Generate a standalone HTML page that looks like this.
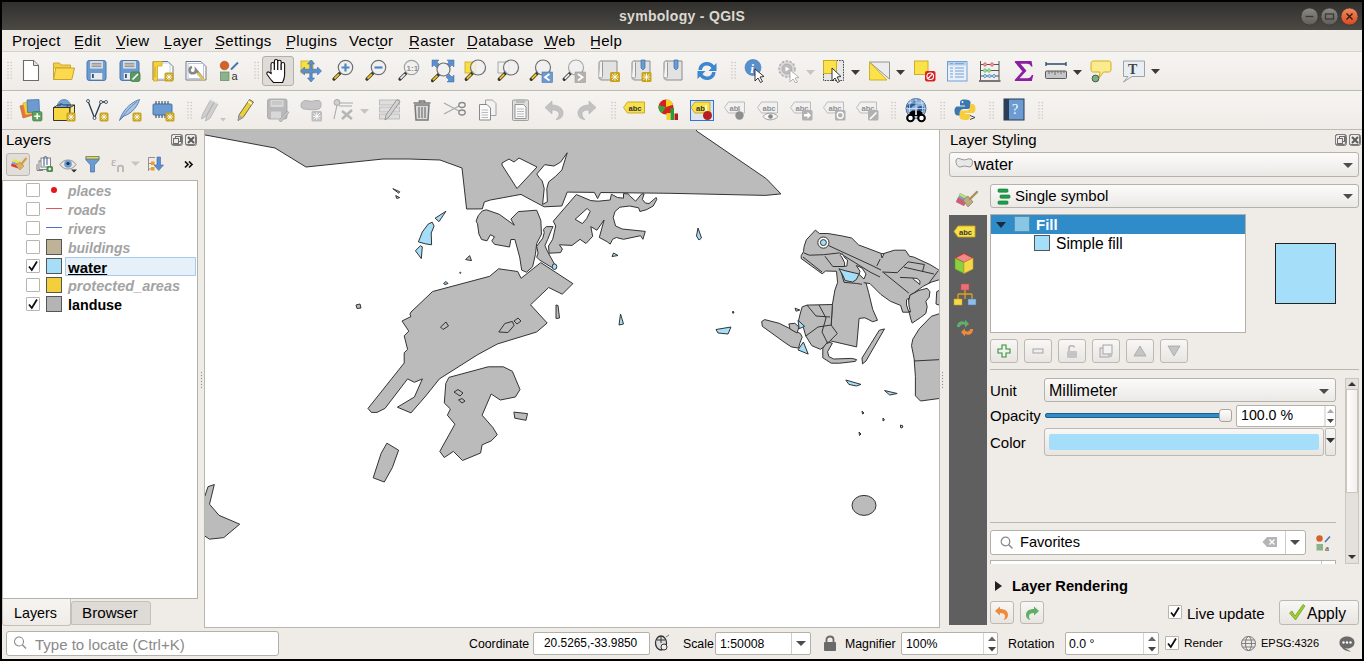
<!DOCTYPE html>
<html><head><meta charset="utf-8">
<style>
*{margin:0;padding:0;box-sizing:border-box}
html,body{width:1364px;height:661px;overflow:hidden;background:#efebe7}
body{position:relative;font-family:"Liberation Sans",sans-serif;color:#000;font-size:15px}
.a{position:absolute}
.t{position:absolute;white-space:pre;line-height:1.149}
.tb{position:absolute;left:2px;width:1360px;background:linear-gradient(#f6f4f1,#efece8);border-bottom:1px solid #bdb9b3}
.grip{position:absolute;width:5px;height:18px;background-image:radial-gradient(circle,#aaa6a0 0.8px,transparent 1px);background-size:3px 3px}
.wb{position:absolute;width:17px;height:17px;border-radius:50%}
.box{position:absolute;background:#fff;border:1px solid #b4b0aa}
.combo{position:absolute;border:1px solid #b5b1ab;border-radius:3px;background:linear-gradient(#fcfbfa,#ebe9e6)}
.btn{position:absolute;border:1px solid #bcb8b2;border-radius:3px;background:linear-gradient(#f8f7f5,#e8e5e1)}
.dd{position:absolute;width:0;height:0;border-left:5px solid transparent;border-right:5px solid transparent;border-top:5px solid #4c4c4c}
.cb{position:absolute;width:14px;height:14px;border:1px solid #b8b4ae;background:#fff;border-radius:1px}
.sw{position:absolute;width:16px;height:16px;border:1px solid #555}
.dbtn{position:absolute;width:11px;height:11px;border:1px solid #777;border-radius:2px}
.gray{color:#a3a3a3}
</style></head><body>
<!-- title bar -->
<div class="a" style="left:0;top:0;width:1364px;height:30px;background:linear-gradient(#2f2e2b,#4a4944)"></div>
<div class="t" style="left:619px;top:8px;font-size:14px;font-weight:bold;color:#dcd9d2;letter-spacing:0.3px">symbology - QGIS</div>
<!-- menu -->
<div class="a" style="left:0;top:30px;width:1364px;height:22px;background:#eeebe7;border-bottom:1px solid #d6d2cc"></div>
<div class="t" style="left:12px;top:32px;letter-spacing:0.3px">Project</div>
<div class="t" style="left:74px;top:32px;letter-spacing:0.3px">Edit</div>
<div class="t" style="left:116px;top:32px;letter-spacing:0.3px">View</div>
<div class="t" style="left:164px;top:32px;letter-spacing:0.3px">Layer</div>
<div class="t" style="left:215px;top:32px;letter-spacing:0.3px">Settings</div>
<div class="t" style="left:286px;top:32px;letter-spacing:0.3px">Plugins</div>
<div class="t" style="left:349px;top:32px;letter-spacing:0.3px">Vector</div>
<div class="t" style="left:409px;top:32px;letter-spacing:0.3px">Raster</div>
<div class="t" style="left:467px;top:32px;letter-spacing:0.3px">Database</div>
<div class="t" style="left:544px;top:32px;letter-spacing:0.3px">Web</div>
<div class="t" style="left:590px;top:32px;letter-spacing:0.3px">Help</div>
<div class="a" style="left:35px;top:48px;width:4px;height:1px;background:#111"></div>
<div class="a" style="left:75px;top:48px;width:8px;height:1px;background:#111"></div>
<div class="a" style="left:116px;top:48px;width:9px;height:1px;background:#111"></div>
<div class="a" style="left:164px;top:48px;width:7px;height:1px;background:#111"></div>
<div class="a" style="left:215px;top:48px;width:8px;height:1px;background:#111"></div>
<div class="a" style="left:286px;top:48px;width:8px;height:1px;background:#111"></div>
<div class="a" style="left:378px;top:48px;width:6px;height:1px;background:#111"></div>
<div class="a" style="left:409px;top:48px;width:10px;height:1px;background:#111"></div>
<div class="a" style="left:467px;top:48px;width:10px;height:1px;background:#111"></div>
<div class="a" style="left:544px;top:48px;width:12px;height:1px;background:#111"></div>
<div class="a" style="left:591px;top:48px;width:9px;height:1px;background:#111"></div>
<!-- toolbars -->
<div class="tb" style="top:52px;height:39px"></div>
<div class="tb" style="top:91px;height:39px"></div>

<!-- ===== left dock ===== -->
<div class="t" style="left:6px;top:131px">Layers</div>
<div class="dbtn" style="left:171px;top:134px"></div>
<div class="dbtn" style="left:185px;top:134px"></div>
<div class="a" style="left:6px;top:153px;width:24px;height:23px;border:1px solid #b9b5af;border-radius:3px;background:#e1ddd8"></div>
<div class="box" style="left:2px;top:180px;width:196px;height:419px"></div>
<!-- layer rows -->
<div class="cb" style="left:26px;top:183px"></div>
<div class="cb" style="left:26px;top:202px"></div>
<div class="cb" style="left:26px;top:221px"></div>
<div class="cb" style="left:26px;top:240px"></div>
<div class="cb" style="left:26px;top:259px"></div>
<div class="cb" style="left:26px;top:278px"></div>
<div class="cb" style="left:26px;top:297px"></div>
<div class="a" style="left:51px;top:187px;width:6px;height:6px;border-radius:50%;background:#e8141b"></div>
<div class="a" style="left:46px;top:208px;width:16px;height:1px;background:#d9585e"></div>
<div class="a" style="left:46px;top:227px;width:16px;height:1px;background:#4b73c9"></div>
<div class="sw" style="left:46px;top:239px;background:#beb297"></div>
<div class="sw" style="left:46px;top:258px;background:#a5def8"></div>
<div class="sw" style="left:46px;top:277px;background:#f3d03b"></div>
<div class="sw" style="left:46px;top:296px;background:#b4b4b4"></div>
<div class="a" style="left:65px;top:257px;width:131px;height:19px;background:#e6f0f9;border:1px solid #a9cbe9"></div>
<div class="t gray" style="left:68px;top:183px;font-size:14px;font-weight:bold;font-style:italic">places</div>
<div class="t gray" style="left:68px;top:202px;font-size:14px;font-weight:bold;font-style:italic">roads</div>
<div class="t gray" style="left:68px;top:221px;font-size:14px;font-weight:bold;font-style:italic">rivers</div>
<div class="t gray" style="left:68px;top:240px;font-size:14px;font-weight:bold;font-style:italic">buildings</div>
<div class="t" style="left:68px;top:259px;font-size:15px;font-weight:bold;text-decoration:underline">water</div>
<div class="t gray" style="left:68px;top:278px;font-size:14.5px;font-weight:bold;font-style:italic">protected_areas</div>
<div class="t" style="left:68px;top:297px;font-size:14.3px;font-weight:bold">landuse</div>
<!-- tabs -->
<div class="a" style="left:71px;top:601px;width:80px;height:24px;background:#dedad5;border:1px solid #c3bfb9;border-radius:3px 3px 0 0"></div>
<div class="a" style="left:2px;top:599px;width:69px;height:27px;background:linear-gradient(#f6f4f1,#efece8);border:1px solid #c3bfb9;border-top:none;border-radius:0 0 3px 3px"></div>
<div class="t" style="left:14px;top:605px;font-size:14.3px">Layers</div>
<div class="t" style="left:82px;top:604px;font-size:15.2px">Browser</div>

<!-- ===== map ===== -->
<div class="a" style="left:204px;top:130px;width:736px;height:498px;background:#fff;border:1px solid #b9b5af;border-top:none"></div>
<div class="a" style="left:198px;top:130px;width:6px;height:497px;background:#efebe7"></div>
<svg class="a" style="left:205px;top:130px" width="734" height="497" viewBox="205 130 734 497">
<g fill="#bbbbbb" stroke="#333" stroke-width="1" stroke-linejoin="round">
<!-- top polygon -->
<path d="M200,120 L200,134 L275,148 L306,167 L383,159 L409,159 L440,160 L462,168 L466.6,209 L482.3,208.9 L484.3,202 L490.4,200 L521,194.4 L531.3,200 L544.2,206.8 L561.8,206 L567.2,192.1 L594.4,192.4 L597.6,198.6 L600.7,192.5 L670,193.3 L765.2,195.4 L780.9,193.9 L766.3,178.7 L697,131.3 L690,120 Z
 M502,163 L509,159 L514,162 L519,158 L537,167 L517,188.5 L502,165 Z
 M536.8,174 L544.7,164.7 L554,166 L560.6,162.1 L567.2,152.8 L561.9,170 L555.3,176.6 L548.7,181.9 L546.8,188.5 L547.4,201.8 L542.6,204.4 L544.2,188.5 L542.1,180.6 L539.4,178 Z" fill-rule="evenodd"/>
<!-- harbor -->
<path d="M553.3,221.2 L576.3,194.5 L590.8,200.6 L598.1,201.2 L610.2,200 L611.4,194.2 L617.5,197.5 L623.5,198.2 L623.5,193.6 L628.4,193.9 L629.6,195.7 L635.6,201.2 L641.7,193.9 L644.1,193.9 L642.3,199.4 L645.3,203 L649,203.6 L656.2,197.5 L656.8,199.4 L653.2,206 L646.5,209.7 L639.9,211.5 L638.6,207.8 L629.6,206 L619.9,207.2 L615,211.5 L613.2,217.5 L615.6,226 L622.3,229 L645.3,231.4 L642.9,239.3 L640.5,235.7 L623.5,239.3 L616.3,237.5 L612.6,239.3 L610.2,244.1 L607.2,241.7 L599.3,237.5 L604.1,220 L596.9,230.2 L590.8,226.6 L592.7,236.3 L586,243.5 L580,239.3 L572.1,245.4 L559.4,244.8 L562.4,249 L560.6,252.6 L549.1,253.2 L548.5,246 L552.7,239.3 L555.7,226 Z
 M575.1,219.3 L587.2,208.4 L590.2,211.5 L586.6,218.7 L582.4,223.6 Z" fill-rule="evenodd"/>
<!-- Y polygon -->
<path d="M476.1,221.1 L478.2,215.7 L482.3,210.9 L486.3,209.8 L499.3,214.3 L514.3,225.2 L510.9,219.1 L518.3,211.6 L536.7,210.2 L540.8,220.4 L541.5,234 L536.7,243.6 L535.4,254.5 L532.6,266.7 L526.5,272.2 L521.7,270.1 L519.7,257.2 L514.9,239.5 L510.9,239.5 L509.5,247 L494.5,244.3 L491.8,240.8 L494.5,236.8 L490.4,234.7 L487,240.8 L481.6,239.5 L478.9,234 L477.5,223.8 Z"/>
<!-- narrow strip -->
<path d="M543.5,229.3 L546.3,226.6 L553.1,226.6 L551.7,229.3 L547.6,239.5 L544.9,245.6 L547.6,251.7 L554.4,264 L551.7,267.4 L539.4,259.9 L536.7,257.2 L538.1,253.1 L536.7,246.3 L542.8,238.1 L544.2,232.7 Z"/>
<!-- SW polygon -->
<path d="M432.6,291.5 L489.7,276.3 L498.6,268.8 L517.7,271.5 L521.1,278.3 L540.8,262.6 L572.9,283.6 L562.3,294.2 L548.7,287.5 L530.5,304.8 L547.2,323 L536.6,332 L497.3,344 L477.6,354.7 L439.4,378.9 L425.8,395.9 L411,412.9 L397.4,407.2 L414.4,397 L422.4,378.9 L414.4,382.3 L407.6,378.9 L385,408.4 L377,412.4 L371.3,412.4 L368,408.4 L404.2,363 L404.2,352.8 L407.6,349.4 L404.2,335.8 L408.8,331.2 L402,321 L411,316.5 L409.9,314.2 L411,312 Z"/>
<path d="M440.5,327 L446,322 L448.5,326 L443,329.5 Z"/>
<path d="M498.8,332 L504.8,323.5 L512.4,321.4 L514,325.5 L508,332.5 Z M514,321 L518,318 L521,321 L517,324 Z"/>
<!-- hand polygon -->
<path d="M448.9,377.4 L488.2,366.8 L503.3,366.8 L512.4,371.3 L520,389.5 L515.4,397 L500.3,400 L491.2,394 L482.1,415.2 L492.7,427.3 L497.3,434.8 L491.2,440.9 L482.1,444.8 L480.6,453 L462.5,460.5 L453.4,451.4 L444.3,457.5 L439.8,451.4 L454.9,424.2 L447.4,415.2 L450.4,409 L444.3,403 L445.8,383.4 Z"/>
<path d="M454,392 L458,389.5 L463,393 L460,396 Z M458.5,400 L462,398.5 L465,401 L462,403 Z"/>
<path d="M513.9,412.1 L527.5,413.6 L526,420.3 L514.8,418.2 Z"/>
<!-- bottom left rect -->
<path d="M386.9,443.2 L398.6,450.2 L392.3,467.7 L384.3,482 L373.2,477.8 L381.1,453.4 Z"/>
<!-- left edge polygon -->
<path d="M200,496.3 L204.8,496.3 L208,486.7 L214.3,484.5 L209.5,504.2 L219,515.3 L239.7,524.2 L223.8,537.6 L209.5,539.2 L204.8,536 L200,536 Z"/>
<!-- circle -->
<ellipse cx="864" cy="505.4" rx="12" ry="10"/>
<!-- small bits -->
<path d="M465.6,259.6 L469.6,255.6 L471.5,260.6 Z"/><circle cx="460.3" cy="272.8" r="0.6"/>
<path d="M356,305 L360,304 L361,308 L357,308.5 Z"/>
<path d="M556,305 L558,305.5 L559.5,318 L556,318.5 Z"/>
<path d="M637,197.7 L656.8,197.7 L653.4,206.6 L640,211 Z" fill="none" stroke="none"/>
<!-- right cluster -->
<path d="M801.2,255.6 L803.5,251.7 L804.1,246.6 L806.3,239.8 L815.4,230.1 L819.4,233.5 L827.9,233.5 L841.5,235.8 L851.7,238 L858.6,244.9 L881.6,253.6 L883.6,253.6 L894.5,250.2 L905.4,250.2 L909.5,256.3 L913.6,257 L929.9,264.5 L936.7,268.6 L940,271 L940,279.5 L931.3,282.2 L923.1,286.3 L913.6,293.1 L910.1,295.1 L908.1,304 L909.5,312.2 L902.7,312.2 L900.6,305.4 L890.4,301.3 L880.9,294.5 L870,283.6 L866,283 L868.6,292.4 L872.7,309.4 L877.5,320.3 L872.7,321.7 L865,317.8 L859.1,318.4 L856.6,346.9 L830,340.8 L831.2,325.1 L832.4,304.5 L834.9,290 L837.6,282.6 L836.5,271.3 L825.6,271 L822.2,273.8 L801.2,258.5 Z"/>
<path d="M910.1,295.1 L919,290.4 L927.2,288.3 L929.9,291.7 L929.2,297.2 L925.8,301.3 L927.2,306.7 L925.8,313.5 L920.4,317.6 L912.2,323.1 L910.8,319 L908.8,310.8 L906.7,304 L908.8,299.9 Z"/>
<path d="M936.7,291.7 L940,290 L940,305.4 L936,304 Z"/>
<path d="M940,313.5 L931.3,316.3 L919.2,328.9 L912.8,339.2 L911.5,345.6 L914.1,358.5 L915.4,376.5 L915.4,395.8 L920.5,401 L940,398.4 Z"/>
<path d="M914,361 L940,359.6" fill="none"/>
<path d="M802.2,306.9 L807,305.1 L832.4,304.5 L831.2,325.1 L837.3,333.6 L830,340.8 L824,346.9 L820.3,349.3 L811.9,345.7 L805.8,336 L803.4,327.5 L798.6,320.3 L800.4,313 Z"/>
<path d="M761.7,321.5 L764.7,319.6 L779.2,323.3 L790.1,328.7 L800.4,333.6 L802.2,337.2 L799.8,343.2 L798.6,348.1 L791.3,346.9 L784,342 L762.3,326.3 Z"/>
<path d="M788.9,323.9 L794.9,323.3 L799,327 L797,333 L790,329 Z"/>
<path d="M822.8,348.1 L827.6,342 L832.4,343.2 L827.6,351.7 L828.8,356.6 L833.7,359 L851.8,358.4 L856.6,359.6 L855.4,361.4 L839.7,363.2 L831.2,363.2 L822.8,357.8 Z"/>
<path d="M884.5,328.9 L879.3,330.2 L862,358 L862.5,363.9 L866,361 Z"/>
<!-- interior lines -->
<path d="M828.2,245.4 L870,264.6 L881,270 M839.4,252.9 L870,272 L880,277 M803.8,252.9 L809.4,255.2 L823.5,254.7 L839.4,252.9 M824.9,256.2 L832.8,266.5 L844.1,266.5 M841,271.5 L844,282.4 L856.3,283.4 L862,284.3 M880.2,259.1 L876.8,265.9 M882.2,272 L897.2,272.7 L908.1,261.8 L924.4,264.5 L922.4,272 M904,267.2 L934,274 M883.6,272.7 L908.8,293.1 M866,283 L863.7,282.6 M900,277.4 L913,278 M929,283 L938,271 M803,257 L822,272" fill="none"/>
<path d="M807,305.1 L816,316 L830,317 M805.8,336 L818,327 L831,325 M819,305 L826,318 L822,332 L828,344" fill="none"/>
<g fill="#fff">
<path d="M840.3,255.5 L842,253.5 L845,258 L847.5,260 L846.9,266 L844.5,266.5 L844.6,262.7 L841.8,257.1 Z"/>
<path d="M856.3,265.5 L862,268 L866,274 L864,279 L859.1,274.5 L860,271.2 Z"/>
<path d="M913,278 L917,278.5 L920,281 L919.7,284.5 L917,282 L913.5,279.5 Z"/>
<path d="M906.5,300 L908.5,298 L909,306 L910.5,312 L908.5,311 L906.5,305 Z"/>
<path d="M881,253.8 L884,253.6 L882,258 Z"/>
</g>
</g>
<g fill="#a5def8" stroke="#333" stroke-width="1" stroke-linejoin="round">
<path d="M838.9,268.8 L845,270.7 L859.1,274 L856.3,279.6 L852.5,282 L845,280.5 L842.7,274.9 Z"/>
<circle cx="823.4" cy="242.6" r="5.6" fill="#fff"/>
<circle cx="823.4" cy="242.6" r="3"/>
<path d="M798,320.3 L804.6,326.3 L799.2,328.7 Z"/>
<path d="M803.4,342 L808.2,354.1 L798,349.9 Z"/>
<path d="M795,308.2 L799.8,310 L796.1,311.2 Z"/>
<path d="M845.8,380 L861,384.4 L856.4,386 L848.9,384.4 Z"/>
<path d="M884.5,390.5 L897.2,393.5 L889.7,395 Z"/>
<path d="M862,411 L864,413 L862.5,414 Z"/>
<path d="M859,432 L861,434 L859.5,435.5 Z"/>
<path d="M900.5,425 L903,426 L902,428 L900.5,427.5 Z"/>
<path d="M883,418 L884.5,420 L883,421 Z"/>
<path d="M698,228 L701.5,238 L699,240 L696.5,236 Z"/>
<path d="M613.6,253 L618,255.5 L612,256.5 Z"/>
<ellipse cx="554.5" cy="266.7" rx="2.3" ry="2.8"/>
<path d="M620.5,314 L623.5,324 L619,325 Z"/>
<path d="M716,329.5 L731,327 L728,334 L718,333 Z"/>
<path d="M733,311 L734,313 L732.5,313 Z"/>
<path d="M418.4,241.9 L422.3,232 L428.2,224.1 L432.2,222.2 L434.1,226.1 L431.2,233 L431.6,244.8 L425.3,243.8 Z"/>
<path d="M435.1,218.2 L445.9,211.3 L439,221.6 Z"/>
<path d="M415.4,250.7 L420.4,245.8 L422.3,246.8 L421.3,258.6 Z"/>
<path d="M392.8,188.7 L399.7,191.7 L398.7,193.2 Z"/>
<path d="M395.7,195.6 L399.7,197.6 L396.7,198.5 Z"/>
<path d="M443.5,283.5 L446,281.5 L448,283.5 L445,284.5 Z"/>
</g>
</svg>


<!-- ===== right dock ===== -->
<div class="t" style="left:950px;top:131px">Layer Styling</div>
<div class="dbtn" style="left:1335px;top:134px"></div>
<div class="dbtn" style="left:1349px;top:134px"></div>
<div class="combo" style="left:949px;top:152px;width:410px;height:25px"></div>
<div class="t" style="left:974px;top:156px;font-size:16px">water</div>
<div class="dd" style="left:1343px;top:163px"></div>
<div class="combo" style="left:990px;top:184px;width:369px;height:24px"></div>
<div class="t" style="left:1015px;top:187px;font-size:15px">Single symbol</div>
<div class="dd" style="left:1343px;top:194px"></div>
<div class="a" style="left:949px;top:215px;width:38px;height:410px;background:#5f5f5f"></div>
<div class="box" style="left:990px;top:214px;width:256px;height:119px"></div>
<div class="a" style="left:991px;top:215px;width:254px;height:19px;background:#308bc9"></div>
<div class="sw" style="left:1014px;top:216px;background:#86c6e6;border-color:#5a8fb0"></div>
<div class="t" style="left:1036px;top:216px;font-size:15px;font-weight:bold;color:#fff">Fill</div>
<div class="a" style="left:996px;top:222px;width:0;height:0;border-left:5px solid transparent;border-right:5px solid transparent;border-top:6px solid #1a2a3a"></div>
<div class="sw" style="left:1034px;top:235px;background:#a5def8"></div>
<div class="t" style="left:1056px;top:235px;font-size:15.6px">Simple fill</div>
<div class="a" style="left:1275px;top:243px;width:61px;height:61px;background:#a5def8;border:1px solid #222"></div>
<div class="btn" style="left:990px;top:339px;width:28px;height:24px"></div>
<div class="btn" style="left:1024px;top:339px;width:28px;height:24px"></div>
<div class="btn" style="left:1058px;top:339px;width:28px;height:24px"></div>
<div class="btn" style="left:1092px;top:339px;width:28px;height:24px"></div>
<div class="btn" style="left:1126px;top:339px;width:28px;height:24px"></div>
<div class="btn" style="left:1160px;top:339px;width:28px;height:24px"></div>
<div class="a" style="left:990px;top:369px;width:369px;height:1px;background:#bab6b0"></div>
<div class="t" style="left:990px;top:382px">Unit</div>
<div class="combo" style="left:1044px;top:378px;width:292px;height:24px"></div>
<div class="t" style="left:1049px;top:382px;font-size:16px">Millimeter</div>
<div class="dd" style="left:1319px;top:389px"></div>
<div class="t" style="left:990px;top:407px">Opacity</div>
<div class="a" style="left:1045px;top:413px;width:182px;height:5px;background:#308bc9;border:1px solid #1f5f8a;border-radius:2px"></div>
<div class="a" style="left:1219px;top:409px;width:13px;height:13px;background:linear-gradient(#fdfdfc,#e9e7e4);border:1px solid #a8a49e;border-radius:3px"></div>
<div class="box" style="left:1236px;top:405px;width:100px;height:22px;border-radius:2px"></div>
<div class="t" style="left:1241px;top:407px;font-size:14.2px">100.0 %</div>
<div class="t" style="left:990px;top:434px">Color</div>
<div class="btn" style="left:1044px;top:428px;width:280px;height:28px"></div>
<div class="a" style="left:1049px;top:434px;width:270px;height:16px;background:#a5def8;border-radius:2px"></div>
<div class="btn" style="left:1325px;top:428px;width:11px;height:28px;border-radius:2px"></div>
<div class="a" style="left:1345px;top:378px;width:14px;height:186px;background:#e4e1dd;border:1px solid #c9c5bf"></div>
<div class="a" style="left:1346px;top:389px;width:12px;height:104px;background:linear-gradient(90deg,#fdfdfc,#f2f0ed);border:1px solid #c9c5bf"></div>
<div class="a" style="left:990px;top:522px;width:346px;height:1px;background:#bab6b0"></div>
<div class="box" style="left:990px;top:530px;width:316px;height:25px;border-radius:3px"></div>
<div class="a" style="left:1285px;top:531px;width:1px;height:23px;background:#d0ccc6"></div>
<div class="t" style="left:1020px;top:534px;font-size:14.6px">Favorites</div>
<div class="dd" style="left:1290px;top:540px"></div>
<div class="box" style="left:990px;top:560px;width:346px;height:10px"></div>
<div class="a" style="left:1321px;top:561px;width:1px;height:4px;background:#c9c5bf"></div>
<div class="a" style="left:949px;top:564px;width:400px;height:10px;background:#efebe7"></div>
<div class="a" style="left:949px;top:215px;width:38px;height:410px;background:#5f5f5f"></div>
<div class="a" style="left:995px;top:581px;width:0;height:0;border-top:5px solid transparent;border-bottom:5px solid transparent;border-left:7px solid #222"></div>
<div class="t" style="left:1012px;top:578px;font-size:14.7px;font-weight:bold">Layer Rendering</div>
<div class="btn" style="left:990px;top:601px;width:24px;height:23px"></div>
<div class="btn" style="left:1020px;top:601px;width:24px;height:23px"></div>
<div class="cb" style="left:1168px;top:605px"></div>
<div class="t" style="left:1187px;top:605px;font-size:15px">Live update</div>
<div class="btn" style="left:1279px;top:600px;width:80px;height:25px"></div>
<div class="t" style="left:1307px;top:605px;font-size:15.6px">Apply</div>

<!-- ===== status bar ===== -->
<div class="box" style="left:6px;top:631px;width:273px;height:25px;border-radius:3px"></div>
<div class="t" style="left:35px;top:636px;font-size:15px;color:#8a8a8a">Type to locate (Ctrl+K)</div>
<div class="t" style="left:469px;top:637px;font-size:12.3px">Coordinate</div>
<div class="box" style="left:533px;top:632px;width:117px;height:23px;border-radius:2px"></div>
<div class="t" style="left:544px;top:637px;font-size:11.9px">20.5265,-33.9850</div>
<div class="t" style="left:683px;top:637px;font-size:12.3px">Scale</div>
<div class="box" style="left:715px;top:632px;width:96px;height:23px;border-radius:2px"></div>
<div class="a" style="left:791px;top:633px;width:1px;height:21px;background:#d0ccc6"></div>
<div class="t" style="left:720px;top:637px;font-size:12.3px">1:50008</div>
<div class="dd" style="left:796px;top:641px"></div>
<div class="t" style="left:845px;top:637px;font-size:12.3px">Magnifier</div>
<div class="box" style="left:901px;top:632px;width:97px;height:23px;border-radius:2px"></div>
<div class="t" style="left:906px;top:637px;font-size:12.3px">100%</div>
<div class="a" style="left:983px;top:633px;width:1px;height:21px;background:#d8d4ce"></div>
<div class="t" style="left:1008px;top:637px;font-size:12.5px">Rotation</div>
<div class="box" style="left:1065px;top:632px;width:94px;height:23px;border-radius:2px"></div>
<div class="t" style="left:1069px;top:637px;font-size:12.3px">0.0 °</div>
<div class="a" style="left:1143px;top:633px;width:1px;height:21px;background:#d8d4ce"></div>
<div class="cb" style="left:1165px;top:636px"></div>
<div class="t" style="left:1184px;top:637px;font-size:11.8px">Render</div>
<div class="t" style="left:1261px;top:637px;font-size:11px">EPSG:4326</div>

<!--ICONS-->
<svg class="a" style="left:1300px;top:7px" width="60" height="19" viewBox="0 0 60 19"><circle cx="9.5" cy="9.5" r="8.6" fill="url(#gb)" stroke="#3a3935" stroke-width="0.8"/><circle cx="29.5" cy="9.5" r="8.6" fill="url(#gb)" stroke="#3a3935" stroke-width="0.8"/><circle cx="49.5" cy="9.5" r="8.6" fill="url(#go)" stroke="#3a3935" stroke-width="0.8"/><defs><linearGradient id="gb" x1="0" y1="0" x2="0" y2="1"><stop offset="0" stop-color="#8c8a85"/><stop offset="1" stop-color="#5e5d58"/></linearGradient><linearGradient id="go" x1="0" y1="0" x2="0" y2="1"><stop offset="0" stop-color="#f38a5f"/><stop offset="1" stop-color="#d84a1c"/></linearGradient></defs><path d="M5.5,9.5 H13.5" stroke="#3b3a36" stroke-width="1.3"/><rect x="25.5" y="7" width="8" height="5" fill="none" stroke="#3b3a36" stroke-width="1.3"/><path d="M46.5,6.5 L52.5,12.5 M52.5,6.5 L46.5,12.5" stroke="#2a1a10" stroke-width="1.3"/></svg>
<svg class="a" style="left:7px;top:61px" width="6" height="20" viewBox="0 0 6 20"><circle cx="1.0" cy="1.5" r="0.65" fill="#bdb9b3"/><circle cx="4.2" cy="1.5" r="0.65" fill="#bdb9b3"/><circle cx="1.0" cy="4.6" r="0.65" fill="#bdb9b3"/><circle cx="4.2" cy="4.6" r="0.65" fill="#bdb9b3"/><circle cx="1.0" cy="7.7" r="0.65" fill="#bdb9b3"/><circle cx="4.2" cy="7.7" r="0.65" fill="#bdb9b3"/><circle cx="1.0" cy="10.8" r="0.65" fill="#bdb9b3"/><circle cx="4.2" cy="10.8" r="0.65" fill="#bdb9b3"/><circle cx="1.0" cy="13.9" r="0.65" fill="#bdb9b3"/><circle cx="4.2" cy="13.9" r="0.65" fill="#bdb9b3"/><circle cx="1.0" cy="17.0" r="0.65" fill="#bdb9b3"/><circle cx="4.2" cy="17.0" r="0.65" fill="#bdb9b3"/></svg>
<svg class="a" style="left:19px;top:59px" width="24" height="24" viewBox="0 0 24 24"><path d="M4.5,1.5 H14.5 L19.5,6.5 V21.5 H4.5 Z" fill="#fff" stroke="#6b6b6b" stroke-width="1.1"/><path d="M14.5,1.5 V6.5 H19.5" fill="#e6e6e6" stroke="#6b6b6b" stroke-width="1"/></svg>
<svg class="a" style="left:52px;top:59px" width="24" height="24" viewBox="0 0 24 24"><path d="M1.5,4 H7.5 L9,6 H18.5 V9 H1.5 Z" fill="#f5cf3e" stroke="#c7a42c" stroke-width="0.9"/><path d="M1.5,20.5 L3.8,9 H22.5 L19.8,20.5 Z" fill="#fdd94f" stroke="#c7a42c" stroke-width="1"/><path d="M1.5,4 V20.5" stroke="#c7a42c" stroke-width="1"/></svg>
<svg class="a" style="left:85px;top:59px" width="24" height="24" viewBox="0 0 24 24"><rect x="2" y="1.5" width="19" height="20" rx="2.2" fill="#6c9bd2" stroke="#4b78ad" stroke-width="1"/><rect x="5.2" y="2.2" width="12.6" height="7.3" fill="#ecebea"/><path d="M6.5,4.3 H16.5 M6.5,6 H16.5 M6.5,7.7 H16.5" stroke="#5a5a5a" stroke-width="0.7"/><rect x="5.8" y="14" width="11.5" height="6.5" fill="#ecebea"/><rect x="7" y="15" width="1.8" height="4" fill="#2e4f7a"/></svg>
<svg class="a" style="left:118px;top:59px" width="24" height="24" viewBox="0 0 24 24"><rect x="2" y="1.5" width="19" height="20" rx="2.2" fill="#6c9bd2" stroke="#4b78ad" stroke-width="1"/><rect x="5.2" y="2.2" width="12.6" height="7.3" fill="#ecebea"/><path d="M6.5,4.3 H16.5 M6.5,6 H16.5 M6.5,7.7 H16.5" stroke="#5a5a5a" stroke-width="0.7"/><rect x="5.8" y="14" width="11.5" height="6.5" fill="#ecebea"/><rect x="7" y="15" width="1.8" height="4" fill="#2e4f7a"/><rect x="12.5" y="13" width="9.5" height="9.5" rx="2" fill="#5a9a5e" stroke="#417a45" stroke-width="0.8"/><path d="M14.5,20.5 L20,15" stroke="#fff" stroke-width="1.6"/></svg>
<svg class="a" style="left:151px;top:59px" width="24" height="24" viewBox="0 0 24 24"><path d="M2,2.5 H17 L22,7.5 V21 H2 Z" fill="#fff" stroke="#777" stroke-width="1"/><rect x="4" y="4" width="15" height="16" fill="none" stroke="#a9c3ea" stroke-width="0.8"/><path d="M2.5,2.5 H11 V7 H6.5 V22 H2.5 Z" fill="#f6cf3c" stroke="#d3a81b" stroke-width="0.8"/><path d="M3,9 H5 M3,11 H5 M3,13 H5 M3,15 H5 M3,17 H5" stroke="#b8921b" stroke-width="0.6"/><rect x="13.5" y="13.5" width="9" height="9" rx="1.5" fill="#c9a21a"/><path d="M18.0,14.8 V21.2 M14.8,18.0 H21.2 M15.5,15.5 L20.5,20.5 M20.5,15.5 L15.5,20.5" stroke="#fff" stroke-width="0.9"/></svg>
<svg class="a" style="left:184px;top:59px" width="24" height="24" viewBox="0 0 24 24"><path d="M2,2.5 H17 L22,7.5 V21 H2 Z" fill="#fff" stroke="#777" stroke-width="1"/><rect x="4" y="4.5" width="15.5" height="15" fill="none" stroke="#a9c3ea" stroke-width="0.9"/><path d="M8,8 A3.2,3.2 0 1 0 12,11 L19,19.5" stroke="#888" stroke-width="2.6" fill="none"/><path d="M13.5,14 L20,21" stroke="#e0c25a" stroke-width="2.6"/></svg>
<svg class="a" style="left:217px;top:59px" width="24" height="24" viewBox="0 0 24 24"><circle cx="7.5" cy="6.5" r="4.3" fill="#d5622a" stroke="#a84a1c" stroke-width="0.6"/><path d="M14,10.5 L21,3.5" stroke="#4a76b0" stroke-width="2"/><rect x="3.5" y="13" width="8.5" height="8.5" fill="#8cb38c" stroke="#5c8b5c" stroke-width="0.7"/><text x="14.5" y="21" font-family="Liberation Sans" font-size="11" fill="#333">a</text></svg>
<svg class="a" style="left:254px;top:61px" width="6" height="20" viewBox="0 0 6 20"><circle cx="1.0" cy="1.5" r="0.65" fill="#bdb9b3"/><circle cx="4.2" cy="1.5" r="0.65" fill="#bdb9b3"/><circle cx="1.0" cy="4.6" r="0.65" fill="#bdb9b3"/><circle cx="4.2" cy="4.6" r="0.65" fill="#bdb9b3"/><circle cx="1.0" cy="7.7" r="0.65" fill="#bdb9b3"/><circle cx="4.2" cy="7.7" r="0.65" fill="#bdb9b3"/><circle cx="1.0" cy="10.8" r="0.65" fill="#bdb9b3"/><circle cx="4.2" cy="10.8" r="0.65" fill="#bdb9b3"/><circle cx="1.0" cy="13.9" r="0.65" fill="#bdb9b3"/><circle cx="4.2" cy="13.9" r="0.65" fill="#bdb9b3"/><circle cx="1.0" cy="17.0" r="0.65" fill="#bdb9b3"/><circle cx="4.2" cy="17.0" r="0.65" fill="#bdb9b3"/></svg>
<div class="a" style="left:262px;top:56px;width:32px;height:30px;border:1px solid #b3afa9;border-radius:3px;background:#dfdbd6"></div>
<svg class="a" style="left:264px;top:57px" width="28" height="28" viewBox="0 0 28 28"><g stroke="#111" stroke-width="1.1" fill="#fff"><rect x="7" y="5.5" width="3.4" height="12" rx="1.7"/><rect x="10.4" y="2.5" width="3.4" height="13" rx="1.7"/><rect x="13.8" y="3.2" width="3.4" height="12.5" rx="1.7"/><rect x="17.2" y="5.5" width="3.4" height="11" rx="1.7"/></g><path d="M7.6,13 H20 V18 C20,21.5 19,23.5 18,25.5 H9.5 C7.5,23.5 4.5,19.5 3,17.2 C2.2,15.8 3.5,14.3 5.2,15.2 L7.6,17 Z" fill="#fff"/><path d="M20.6,15 V18 C20.6,21.5 19.5,23.5 18.5,25.5 H9.5 C7.5,23.5 4.5,19.5 3,17.2 C2.2,15.8 3.5,14.3 5.2,15.2 L7,16.5 V15" fill="none" stroke="#111" stroke-width="1.1"/></svg>
<svg class="a" style="left:299px;top:59px" width="24" height="24" viewBox="0 0 24 24"><rect x="2" y="2" width="12" height="12" fill="#f7df43" stroke="#c9a81f" stroke-width="0.8"/><path d="M12,1 L15.5,5 H13.2 V10.2 H18.5 V8 L22.5,12 L18.5,16 V13.8 H13.2 V19 H15.5 L12,23 L8.5,19 H10.8 V13.8 H5.5 V16 L1.5,12 L5.5,8 V10.2 H10.8 V5 H8.5 Z" fill="#5b8fd0" stroke="#3d6aa6" stroke-width="0.6"/></svg>
<svg class="a" style="left:331px;top:59px" width="24" height="24" viewBox="0 0 24 24"><line x1="9.46" y1="13.54" x2="2.960000000000001" y2="20.04" stroke="#333" stroke-width="3.2" stroke-linecap="round"/><line x1="7.960000000000001" y1="15.04" x2="3.460000000000001" y2="19.54" stroke="#f2c318" stroke-width="1.8" stroke-linecap="butt"/><circle cx="14.5" cy="8.5" r="7.2" fill="#f0f0f0" stroke="#6f6f6f" stroke-width="1.2"/><path d="M14.5,4.5 V12.5 M10.5,8.5 H18.5" stroke="#4f86c6" stroke-width="2.2"/></svg>
<svg class="a" style="left:364px;top:59px" width="24" height="24" viewBox="0 0 24 24"><line x1="9.46" y1="13.54" x2="2.960000000000001" y2="20.04" stroke="#333" stroke-width="3.2" stroke-linecap="round"/><line x1="7.960000000000001" y1="15.04" x2="3.460000000000001" y2="19.54" stroke="#f2c318" stroke-width="1.8" stroke-linecap="butt"/><circle cx="14.5" cy="8.5" r="7.2" fill="#f0f0f0" stroke="#6f6f6f" stroke-width="1.2"/><path d="M10.5,8.5 H18.5" stroke="#4f86c6" stroke-width="2.2"/></svg>
<svg class="a" style="left:397px;top:59px" width="24" height="24" viewBox="0 0 24 24"><line x1="9.46" y1="13.54" x2="2.960000000000001" y2="20.04" stroke="#333" stroke-width="3.2" stroke-linecap="round"/><line x1="7.960000000000001" y1="15.04" x2="3.460000000000001" y2="19.54" stroke="#e8e8e8" stroke-width="1.8" stroke-linecap="butt"/><circle cx="14.5" cy="8.5" r="7.2" fill="#f0f0f0" stroke="#a0a0a0" stroke-width="1.2"/><text x="9.6" y="11.5" font-family="Liberation Sans" font-weight="bold" font-size="8" fill="#909090">1:1</text></svg>
<svg class="a" style="left:431px;top:59px" width="24" height="24" viewBox="0 0 24 24"><path d="M1,1 H8 L6,3 L9,6 L6,9 L3,6 L1,8 Z M23,1 H16 L18,3 L15,6 L18,9 L21,6 L23,8 Z M23,23 H16 L18,21 L15,18 L18,15 L21,18 L23,16 Z" fill="#5b8fd0" stroke="#3d6aa6" stroke-width="0.5"/><line x1="7.95" y1="15.05" x2="1.4500000000000002" y2="21.55" stroke="#333" stroke-width="3.2" stroke-linecap="round"/><line x1="6.45" y1="16.55" x2="1.9500000000000002" y2="21.05" stroke="#f2c318" stroke-width="1.8" stroke-linecap="butt"/><circle cx="12.5" cy="10.5" r="6.5" fill="#f0f0f0" stroke="#6f6f6f" stroke-width="1.2"/></svg>
<svg class="a" style="left:463px;top:59px" width="24" height="24" viewBox="0 0 24 24"><rect x="2" y="3" width="11" height="11" fill="#f7df43" stroke="#c9a81f" stroke-width="0.8"/><line x1="9.75" y1="13.75" x2="3.25" y2="20.25" stroke="#333" stroke-width="3.2" stroke-linecap="round"/><line x1="8.25" y1="15.25" x2="3.75" y2="19.75" stroke="#f2c318" stroke-width="1.8" stroke-linecap="butt"/><circle cx="15" cy="8.5" r="7.5" fill="rgba(240,240,240,0.85)" stroke="#6f6f6f" stroke-width="1.2"/></svg>
<svg class="a" style="left:496px;top:59px" width="24" height="24" viewBox="0 0 24 24"><rect x="2" y="3" width="11" height="11" fill="#efefef" stroke="#999" stroke-width="0.8"/><line x1="9.75" y1="13.75" x2="3.25" y2="20.25" stroke="#333" stroke-width="3.2" stroke-linecap="round"/><line x1="8.25" y1="15.25" x2="3.75" y2="19.75" stroke="#f2c318" stroke-width="1.8" stroke-linecap="butt"/><circle cx="15" cy="8.5" r="7.5" fill="rgba(240,240,240,0.85)" stroke="#6f6f6f" stroke-width="1.2"/></svg>
<svg class="a" style="left:529px;top:59px" width="24" height="24" viewBox="0 0 24 24"><line x1="8.75" y1="13.75" x2="2.25" y2="20.25" stroke="#333" stroke-width="3.2" stroke-linecap="round"/><line x1="7.25" y1="15.25" x2="2.75" y2="19.75" stroke="#f2c318" stroke-width="1.8" stroke-linecap="butt"/><circle cx="14" cy="8.5" r="7.5" fill="#f0f0f0" stroke="#6f6f6f" stroke-width="1.2"/><rect x="13" y="13" width="10.5" height="10.5" fill="#6b9bd1" stroke="#4a76a8" stroke-width="0.6"/><path d="M20.5,15 L16,18.2 L20.5,21.5" stroke="#fff" stroke-width="1.8" fill="none"/></svg>
<svg class="a" style="left:562px;top:59px" width="24" height="24" viewBox="0 0 24 24"><line x1="8.75" y1="13.75" x2="2.25" y2="20.25" stroke="#333" stroke-width="3.2" stroke-linecap="round"/><line x1="7.25" y1="15.25" x2="2.75" y2="19.75" stroke="#e8e8e8" stroke-width="1.8" stroke-linecap="butt"/><circle cx="14" cy="8.5" r="7.5" fill="#f0f0f0" stroke="#a8a8a8" stroke-width="1.2"/><rect x="13" y="13" width="10.5" height="10.5" fill="#b5b2ae" stroke="#9c9995" stroke-width="0.6"/><path d="M16,15 L20.5,18.2 L16,21.5" stroke="#fff" stroke-width="1.8" fill="none"/></svg>
<svg class="a" style="left:597px;top:59px" width="24" height="24" viewBox="0 0 24 24"><path d="M5,2 H20 V21 H5 C3,21 2,20 2,18.5 V3.5 C2,2.5 3,2 4,2 Z" fill="#e2e2e2" stroke="#8c8c8c" stroke-width="1"/><path d="M4,2 C5,2 5.5,2.5 5.5,3.5 V17.5 C5.5,18.5 5,19 4,19 C3,19 2.3,18.5 2,18" fill="#f4f4f4" stroke="#8c8c8c" stroke-width="0.9"/><rect x="13" y="13" width="10" height="10" rx="1.5" fill="#c9a21a"/><path d="M18.0,14.3 V21.7 M14.3,18.0 H21.7 M15,15 L21,21 M21,15 L15,21" stroke="#fff" stroke-width="0.9"/></svg>
<svg class="a" style="left:630px;top:59px" width="24" height="24" viewBox="0 0 24 24"><path d="M5,2 H20 V21 H5 C3,21 2,20 2,18.5 V3.5 C2,2.5 3,2 4,2 Z" fill="#e2e2e2" stroke="#8c8c8c" stroke-width="1"/><path d="M4,2 C5,2 5.5,2.5 5.5,3.5 V17.5 C5.5,18.5 5,19 4,19 C3,19 2.3,18.5 2,18" fill="#f4f4f4" stroke="#8c8c8c" stroke-width="0.9"/><path d="M11,1 H15 V9 L13,11 L11,9 Z" fill="#6b9bd1" stroke="#3d6aa6" stroke-width="0.7"/><rect x="11.5" y="13" width="10" height="10" rx="1.5" fill="#c9a21a"/><path d="M16.5,14.3 V21.7 M12.8,18.0 H20.2 M13.5,15 L19.5,21 M19.5,15 L13.5,21" stroke="#fff" stroke-width="0.9"/></svg>
<svg class="a" style="left:662px;top:59px" width="24" height="24" viewBox="0 0 24 24"><path d="M5,2 H20 V21 H5 C3,21 2,20 2,18.5 V3.5 C2,2.5 3,2 4,2 Z" fill="#e2e2e2" stroke="#8c8c8c" stroke-width="1"/><path d="M4,2 C5,2 5.5,2.5 5.5,3.5 V17.5 C5.5,18.5 5,19 4,19 C3,19 2.3,18.5 2,18" fill="#f4f4f4" stroke="#8c8c8c" stroke-width="0.9"/><path d="M12,1 H16 V9 L14,11 L12,9 Z" fill="#6b9bd1" stroke="#3d6aa6" stroke-width="0.7"/></svg>
<svg class="a" style="left:695px;top:59px" width="24" height="24" viewBox="0 0 24 24"><path d="M3.5,11 C3.5,5.5 8,3 12,3 C15,3 17.5,4.5 19,6.5 L21.5,4 V12 H13.5 L16.5,9 C15.5,7.5 14,6.5 12,6.5 C9,6.5 7,8.5 7,11 Z" fill="#3f86d0"/><path d="M20.5,13 C20.5,18.5 16,21 12,21 C9,21 6.5,19.5 5,17.5 L2.5,20 V12 H10.5 L7.5,15 C8.5,16.5 10,17.5 12,17.5 C15,17.5 17,15.5 17,13 Z" fill="#3f86d0"/></svg>
<svg class="a" style="left:731px;top:61px" width="6" height="20" viewBox="0 0 6 20"><circle cx="1.0" cy="1.5" r="0.65" fill="#bdb9b3"/><circle cx="4.2" cy="1.5" r="0.65" fill="#bdb9b3"/><circle cx="1.0" cy="4.6" r="0.65" fill="#bdb9b3"/><circle cx="4.2" cy="4.6" r="0.65" fill="#bdb9b3"/><circle cx="1.0" cy="7.7" r="0.65" fill="#bdb9b3"/><circle cx="4.2" cy="7.7" r="0.65" fill="#bdb9b3"/><circle cx="1.0" cy="10.8" r="0.65" fill="#bdb9b3"/><circle cx="4.2" cy="10.8" r="0.65" fill="#bdb9b3"/><circle cx="1.0" cy="13.9" r="0.65" fill="#bdb9b3"/><circle cx="4.2" cy="13.9" r="0.65" fill="#bdb9b3"/><circle cx="1.0" cy="17.0" r="0.65" fill="#bdb9b3"/><circle cx="4.2" cy="17.0" r="0.65" fill="#bdb9b3"/></svg>
<svg class="a" style="left:744px;top:59px" width="24" height="24" viewBox="0 0 24 24"><circle cx="9" cy="8.5" r="8" fill="#5a8fcd" stroke="#4173ad" stroke-width="0.6"/><text x="6.5" y="13.5" font-family="Liberation Serif" font-style="italic" font-weight="bold" font-size="12" fill="#fff">i</text><path d="M11,10 L11,22 L14,19 L16.5,23.5 L18.5,22.5 L16,18 L20,17.5 Z" fill="#fff" stroke="#222" stroke-width="0.9" stroke-linejoin="round"/></svg>
<svg class="a" style="left:777px;top:59px" width="24" height="24" viewBox="0 0 24 24"><circle cx="10" cy="10" r="8" fill="#d9d9d9" stroke="#b0b0b0" stroke-width="1.5" stroke-dasharray="2.5 1.5"/><circle cx="10" cy="10" r="5" fill="#bdbdbd" stroke="#a0a0a0" stroke-width="0.6"/><path d="M8.5,7.5 L12.5,10 L8.5,12.5 Z" fill="#fff"/><path d="M13,11 L13,23 L16,20 L18.5,24 L20.5,23 L18,19 L22,18.5 Z" fill="#fff" stroke="#aaa" stroke-width="0.9" stroke-linejoin="round"/></svg>
<svg class="a" style="left:806px;top:70px" width="9" height="5" viewBox="0 0 9 5"><path d="M0,0 L9,0 L4.5,5 Z" fill="#c8c5c1"/></svg>
<svg class="a" style="left:822px;top:59px" width="24" height="24" viewBox="0 0 24 24"><rect x="1.5" y="1.5" width="20" height="20" fill="#e8e8e8" stroke="#333" stroke-width="0.9" stroke-dasharray="1.6 1"/><rect x="1.5" y="1.5" width="13" height="13" fill="#fbe24b" stroke="#c9a81f" stroke-width="0.9"/><path d="M10,9 L10,22 L13,19 L15.5,23.5 L17.5,22.5 L15,18 L19,17.5 Z" fill="#fff" stroke="#222" stroke-width="0.9" stroke-linejoin="round"/></svg>
<svg class="a" style="left:851px;top:70px" width="9" height="5" viewBox="0 0 9 5"><path d="M0,0 L9,0 L4.5,5 Z" fill="#3a3a3a"/></svg>
<svg class="a" style="left:868px;top:59px" width="24" height="24" viewBox="0 0 24 24"><path d="M1.5,3 L21.5,3 L21.5,20 Z" fill="#ececec" stroke="#8a8a8a" stroke-width="0.9"/><path d="M1.5,3 L1.5,21 L19,21 Z" fill="#fbe24b" stroke="#c9a81f" stroke-width="0.9"/></svg>
<svg class="a" style="left:896px;top:70px" width="9" height="5" viewBox="0 0 9 5"><path d="M0,0 L9,0 L4.5,5 Z" fill="#3a3a3a"/></svg>
<svg class="a" style="left:913px;top:59px" width="24" height="24" viewBox="0 0 24 24"><rect x="1.5" y="2" width="13.5" height="13.5" fill="#fbe24b" stroke="#c9a81f" stroke-width="0.9"/><rect x="12" y="12" width="10.5" height="10.5" rx="2" fill="#d92121"/><circle cx="17.25" cy="17.25" r="3.3" fill="none" stroke="#fff" stroke-width="1.1"/><path d="M15,19.5 L19.5,15" stroke="#fff" stroke-width="1.1"/></svg>
<svg class="a" style="left:945px;top:59px" width="24" height="24" viewBox="0 0 24 24"><rect x="2.5" y="2.5" width="19.5" height="19.5" fill="#e9f0f8" stroke="#6f9fd6" stroke-width="1"/><rect x="3" y="3" width="18.5" height="3.5" fill="#b9d0ec"/><path d="M5,4.7 H8 M10,4.7 H19 M5,9 H8 M10,9 H19 M5,12 H8 M10,12 H19 M5,15 H8 M10,15 H19 M5,18 H8 M10,18 H19" stroke="#6f9fd6" stroke-width="1"/></svg>
<svg class="a" style="left:978px;top:59px" width="24" height="24" viewBox="0 0 24 24"><path d="M2.5,2 V21 M21,2 V21 M2.5,5.5 H21 M2.5,11.5 H21 M2.5,17 H21" stroke="#555" stroke-width="1"/><rect x="1" y="21" width="21.5" height="2" fill="#777"/><path d="M7,3.5 L9,5.5 L7,7.5 L5,5.5 Z M14,3.5 L16,5.5 L14,7.5 L12,5.5 Z" fill="#f39b9b" stroke="#c33" stroke-width="0.7"/><path d="M7,9.5 L9,11.5 L7,13.5 L5,11.5 Z M11,9.5 L13,11.5 L11,13.5 L9,11.5 Z" fill="#a6dca6" stroke="#4a4" stroke-width="0.7"/><path d="M7,15 L9,17 L7,19 L5,17 Z M11.5,15 L13.5,17 L11.5,19 L9.5,17 Z M16,15 L18,17 L16,19 L14,17 Z" fill="#a9cdef" stroke="#48c" stroke-width="0.7"/></svg>
<svg class="a" style="left:1011px;top:59px" width="24" height="24" viewBox="0 0 24 24"><path d="M4,2 H20.5 L21.5,7.5 H20 C19.3,5.5 18,4.8 16,4.8 H9.5 L15.5,11.8 L8.5,19.2 H16.5 C18.5,19.2 19.8,18.2 20.8,16 H22.3 L20.8,22 H3.8 V20.8 L11.3,12.3 L3.8,3.2 Z" fill="#8b1fa0"/></svg>
<svg class="a" style="left:1044px;top:59px" width="24" height="24" viewBox="0 0 24 24"><path d="M2,5 H22 M2,3 V7 M22,3 V7" stroke="#2b4a70" stroke-width="1.3"/><rect x="1.5" y="12" width="21" height="7.5" rx="1" fill="#c6c6c6" stroke="#5a5a5a" stroke-width="1"/><path d="M5,12 V15 M8,12 V14 M11,12 V16 M14,12 V14 M17,12 V15 M20,12 V14" stroke="#555" stroke-width="0.8"/></svg>
<svg class="a" style="left:1073px;top:70px" width="9" height="5" viewBox="0 0 9 5"><path d="M0,0 L9,0 L4.5,5 Z" fill="#3a3a3a"/></svg>
<svg class="a" style="left:1089px;top:59px" width="24" height="24" viewBox="0 0 24 24"><path d="M4.5,2 H19.5 C21.5,2 22,3 22,5 V10 C22,12 21.5,13 19.5,13 H14.5 L10,19 L11,13 H4.5 C2.5,13 2,12 2,10 V5 C2,3 2.5,2 4.5,2 Z" fill="#faeb8e" stroke="#d3ad1c" stroke-width="1"/><circle cx="6.5" cy="19.5" r="3.4" fill="#74b37c" stroke="#4d4d4d" stroke-width="0.9"/></svg>
<svg class="a" style="left:1122px;top:59px" width="24" height="24" viewBox="0 0 24 24"><path d="M1.5,2 H22.5 V17.5 H10 L1.5,23 L6,17.5 H1.5 Z" fill="#e8eff4" stroke="#999" stroke-width="0.9"/><text x="6" y="14.5" font-family="Liberation Serif" font-weight="bold" font-size="14" fill="#444">T</text></svg>
<svg class="a" style="left:1151px;top:69px" width="9" height="5" viewBox="0 0 9 5"><path d="M0,0 L9,0 L4.5,5 Z" fill="#3a3a3a"/></svg>
<svg class="a" style="left:7px;top:101px" width="6" height="20" viewBox="0 0 6 20"><circle cx="1.0" cy="1.5" r="0.65" fill="#bdb9b3"/><circle cx="4.2" cy="1.5" r="0.65" fill="#bdb9b3"/><circle cx="1.0" cy="4.6" r="0.65" fill="#bdb9b3"/><circle cx="4.2" cy="4.6" r="0.65" fill="#bdb9b3"/><circle cx="1.0" cy="7.7" r="0.65" fill="#bdb9b3"/><circle cx="4.2" cy="7.7" r="0.65" fill="#bdb9b3"/><circle cx="1.0" cy="10.8" r="0.65" fill="#bdb9b3"/><circle cx="4.2" cy="10.8" r="0.65" fill="#bdb9b3"/><circle cx="1.0" cy="13.9" r="0.65" fill="#bdb9b3"/><circle cx="4.2" cy="13.9" r="0.65" fill="#bdb9b3"/><circle cx="1.0" cy="17.0" r="0.65" fill="#bdb9b3"/><circle cx="4.2" cy="17.0" r="0.65" fill="#bdb9b3"/></svg>
<svg class="a" style="left:19px;top:98px" width="24" height="24" viewBox="0 0 24 24"><path d="M1,8 L11,5 L14,17 L4,20 Z" fill="#e6763c" stroke="#b85a28" stroke-width="0.6"/><path d="M4,5 L13,3 L15.5,15 L6.5,17 Z" fill="#f7cf3a" stroke="#c9a21a" stroke-width="0.6"/><path d="M8,2 L20,1.5 L20.5,14 L8.5,14.5 Z" fill="#6b9bd1" stroke="#3d6aa6" stroke-width="0.7"/><rect x="13.5" y="13.5" width="9.5" height="9.5" rx="1.5" fill="#5ca05e" stroke="#3e7a40" stroke-width="0.6"/><path d="M18.25,15.3 V21.2 M15.3,18.25 H21.2" stroke="#fff" stroke-width="1.6"/></svg>
<svg class="a" style="left:52px;top:98px" width="24" height="24" viewBox="0 0 24 24"><circle cx="12" cy="8" r="6.5" fill="#7aa3d6" stroke="#4a76a8" stroke-width="0.7"/><path d="M8,6 C10,5 11,8 13,7 C14,6 16,7 15,9 M9,10 C10,11 12,10 12,12" stroke="#2e5587" stroke-width="1.2" fill="none"/><path d="M1.5,9 L6,6.5 H23 V19.5 L18.5,22.5 H1.5 Z" fill="none"/><path d="M1.5,9.5 H18 V22.5 H1.5 Z" fill="#f7d742" stroke="#222" stroke-width="0.9"/><path d="M18,9.5 L22.5,7 V19.5 L18,22.5 Z" fill="#f5e98a" stroke="#222" stroke-width="0.9"/><path d="M1.5,9.5 L6,7 H9 M15,7 H22.5" stroke="#222" stroke-width="0.9" fill="none"/><rect x="14.5" y="14.5" width="9" height="9" rx="1.5" fill="#c9a21a"/><path d="M19.0,15.8 V22.2 M15.8,19.0 H22.2 M16.5,16.5 L21.5,21.5 M21.5,16.5 L16.5,21.5" stroke="#fff" stroke-width="0.9"/></svg>
<svg class="a" style="left:85px;top:98px" width="24" height="24" viewBox="0 0 24 24"><path d="M3,3 L9.5,20 L16,4 L21,4" stroke="#263a4f" stroke-width="1.3" fill="none"/><circle cx="3" cy="3" r="1.5" fill="#fff" stroke="#263a4f" stroke-width="0.8"/><circle cx="9.5" cy="20" r="1.5" fill="#fff" stroke="#263a4f" stroke-width="0.8"/><circle cx="16" cy="4" r="1.5" fill="#fff" stroke="#263a4f" stroke-width="0.8"/><circle cx="21" cy="4" r="1.5" fill="#fff" stroke="#263a4f" stroke-width="0.8"/><rect x="14.5" y="14.5" width="9" height="9" rx="1.5" fill="#c9a21a"/><path d="M19.0,15.8 V22.2 M15.8,19.0 H22.2 M16.5,16.5 L21.5,21.5 M21.5,16.5 L16.5,21.5" stroke="#fff" stroke-width="0.9"/></svg>
<svg class="a" style="left:118px;top:98px" width="24" height="24" viewBox="0 0 24 24"><path d="M1.5,22.5 C4,14 11,5 21.5,1.5 C20,7 15,15 6,18 Z" fill="#a9c4e4" stroke="#4f79ad" stroke-width="0.9"/><path d="M2,22 C7,15 12,9 19,3.5" stroke="#4f79ad" stroke-width="0.7" fill="none"/><rect x="14.5" y="14.5" width="9" height="9" rx="1.5" fill="#c9a21a"/><path d="M19.0,15.8 V22.2 M15.8,19.0 H22.2 M16.5,16.5 L21.5,21.5 M21.5,16.5 L16.5,21.5" stroke="#fff" stroke-width="0.9"/></svg>
<svg class="a" style="left:151px;top:98px" width="24" height="24" viewBox="0 0 24 24"><rect x="2" y="6" width="19" height="11" rx="1" fill="#6c9bd2" stroke="#3d6aa6" stroke-width="0.9"/><path d="M5,3 V6 M8,3 V6 M11,3 V6 M14,3 V6 M17,3 V6 M5,17 V20 M8,17 V20 M11,17 V20 M14,17 V20" stroke="#263a4f" stroke-width="1"/><rect x="14.5" y="14.5" width="9" height="9" rx="1.5" fill="#c9a21a"/><path d="M19.0,15.8 V22.2 M15.8,19.0 H22.2 M16.5,16.5 L21.5,21.5 M21.5,16.5 L16.5,21.5" stroke="#fff" stroke-width="0.9"/></svg>
<svg class="a" style="left:187px;top:101px" width="6" height="20" viewBox="0 0 6 20"><circle cx="1.0" cy="1.5" r="0.65" fill="#bdb9b3"/><circle cx="4.2" cy="1.5" r="0.65" fill="#bdb9b3"/><circle cx="1.0" cy="4.6" r="0.65" fill="#bdb9b3"/><circle cx="4.2" cy="4.6" r="0.65" fill="#bdb9b3"/><circle cx="1.0" cy="7.7" r="0.65" fill="#bdb9b3"/><circle cx="4.2" cy="7.7" r="0.65" fill="#bdb9b3"/><circle cx="1.0" cy="10.8" r="0.65" fill="#bdb9b3"/><circle cx="4.2" cy="10.8" r="0.65" fill="#bdb9b3"/><circle cx="1.0" cy="13.9" r="0.65" fill="#bdb9b3"/><circle cx="4.2" cy="13.9" r="0.65" fill="#bdb9b3"/><circle cx="1.0" cy="17.0" r="0.65" fill="#bdb9b3"/><circle cx="4.2" cy="17.0" r="0.65" fill="#bdb9b3"/></svg>
<svg class="a" style="left:200px;top:98px" width="24" height="25" viewBox="0 0 24 25"><g fill="#cfcfcf" stroke="#a8a8a8" stroke-width="0.7"><path d="M1.5,21 L2.5,16.5 L10.5,2 L14,3.8 L6,18.3 Z"/><path d="M5.5,23 L6.5,18.5 L14.5,4 L18,5.8 L10,20.3 Z"/></g><path d="M10.5,2 L14,3.8 M14.5,4 L18,5.8" stroke="#e8e8e8" stroke-width="1.2"/></svg>
<svg class="a" style="left:220px;top:118px" width="6" height="3.5" viewBox="0 0 6 3.5"><path d="M0,0 L6,0 L3.0,3.5 Z" fill="#c8c5c1"/></svg>
<svg class="a" style="left:234px;top:98px" width="24" height="24" viewBox="0 0 24 24"><path d="M4,22.5 L5,17 L15.5,1.5 L19.5,4 L9,19.5 Z" fill="#ecd234" stroke="#5e5e5e" stroke-width="0.9"/><path d="M4,22.5 L5,17 L9,19.5 Z" fill="#aaa"/><path d="M14,3.5 L18,6" stroke="#fff" stroke-width="1.2"/></svg>
<svg class="a" style="left:266px;top:98px" width="24" height="24" viewBox="0 0 24 24"><rect x="1.5" y="1" width="19.5" height="20" rx="2" fill="#b9b9b9" stroke="#a3a3a3" stroke-width="0.8"/><rect x="4.5" y="2" width="13" height="7" fill="#d8d8d8"/><path d="M6,4 H16 M6,6 H16" stroke="#aaa" stroke-width="0.6"/><rect x="5" y="13.5" width="10" height="7" fill="#d8d8d8"/><path d="M13,22.5 L21,13 L23,14.5 L15,24 Z" fill="#c4c4c4" stroke="#999" stroke-width="0.6"/></svg>
<svg class="a" style="left:299px;top:98px" width="24" height="24" viewBox="0 0 24 24"><path d="M2,7.5 C2,3 6,1.5 10,3 C13,4 16,2 19.5,2.5 C22.5,3 22.5,7 21.5,9.5 C20.5,12 14,12 10,11.5 C6,11 2,12 2,7.5 Z" fill="#c5c5c5" stroke="#a5a5a5" stroke-width="0.8"/><rect x="12.5" y="13" width="10.5" height="10.5" rx="1.5" fill="#bdbdbd"/><path d="M17.75,14.3 V22.2 M13.8,18.25 H21.7 M14.5,15 L21.0,21.5 M21.0,15 L14.5,21.5" stroke="#fff" stroke-width="0.9"/></svg>
<svg class="a" style="left:331px;top:98px" width="24" height="24" viewBox="0 0 24 24"><circle cx="6" cy="4.5" r="3" fill="#d0d0d0" stroke="#999" stroke-width="0.8"/><path d="M6,7 L3,21 M8,5 H22 M8,8 H21" stroke="#aaa" stroke-width="1.1"/><path d="M11,13 L21,21 M11,21 L21,12" stroke="#b5b5b5" stroke-width="2.5"/></svg>
<svg class="a" style="left:360px;top:109px" width="9" height="5" viewBox="0 0 9 5"><path d="M0,0 L9,0 L4.5,5 Z" fill="#c8c5c1"/></svg>
<svg class="a" style="left:378px;top:98px" width="24" height="24" viewBox="0 0 24 24"><rect x="1.5" y="2" width="20" height="5" fill="#dedede" stroke="#b5b5b5" stroke-width="0.8"/><rect x="1.5" y="9" width="20" height="5" fill="#dedede" stroke="#b5b5b5" stroke-width="0.8"/><rect x="1.5" y="16" width="20" height="5" fill="#dedede" stroke="#b5b5b5" stroke-width="0.8"/><path d="M7,22 L8,17 L19,1.5 L22,3.5 L11,19 Z" fill="#d3d3d3" stroke="#888" stroke-width="0.8"/></svg>
<svg class="a" style="left:410px;top:98px" width="24" height="24" viewBox="0 0 24 24"><path d="M3.5,5 H20.5 M9.5,5 V3 H14.5 V5" stroke="#7a7a7a" stroke-width="1.6" fill="none"/><path d="M5,7 H19 L18,22 H6 Z" fill="#dadada" stroke="#7a7a7a" stroke-width="1.5"/><path d="M9,9 V20 M12,9 V20 M15,9 V20" stroke="#7a7a7a" stroke-width="1.3"/></svg>
<svg class="a" style="left:443px;top:98px" width="24" height="24" viewBox="0 0 24 24"><path d="M1,5 L16,13 M1,16 L16,8" stroke="#a9a9a9" stroke-width="1.3"/><ellipse cx="19" cy="7" rx="3.2" ry="2.5" fill="none" stroke="#8a8a8a" stroke-width="1.3"/><ellipse cx="19" cy="14.5" rx="3.2" ry="2.5" fill="none" stroke="#8a8a8a" stroke-width="1.3"/></svg>
<svg class="a" style="left:476px;top:98px" width="24" height="24" viewBox="0 0 24 24"><path d="M9.5,2 H16.5 L20,5.5 V17.5 H9.5 Z" fill="#f2f2f2" stroke="#9a9a9a" stroke-width="0.9"/><path d="M3.5,6.5 H11 L14.5,10 V22 H3.5 Z" fill="#fafafa" stroke="#8a8a8a" stroke-width="1"/><path d="M5.5,12 H12 M5.5,14.5 H12 M5.5,17 H12 M5.5,19.5 H12" stroke="#aaa" stroke-width="0.8"/></svg>
<svg class="a" style="left:509px;top:98px" width="24" height="24" viewBox="0 0 24 24"><rect x="3.5" y="2" width="16" height="20.5" rx="1" fill="#dcdcdc" stroke="#999" stroke-width="0.9"/><rect x="7" y="1" width="9" height="4" rx="1" fill="#bbb"/><path d="M6,6.5 H14.5 L17,9 V20.5 H6 Z" fill="#fafafa" stroke="#8a8a8a" stroke-width="0.9"/><path d="M8,11 H15 M8,13.5 H15 M8,16 H15 M8,18.5 H15" stroke="#aaa" stroke-width="0.8"/></svg>
<svg class="a" style="left:542px;top:98px" width="24" height="24" viewBox="0 0 24 24"><path d="M3,9.5 L10,3 V7 C16,7 21,10 21,15 C21,19 18,21.5 14,21.5 C16,20 17,18 17,16 C17,13 14,12 10,12 V16 Z" fill="#c2c2c2" stroke="#b0b0b0" stroke-width="0.6"/></svg>
<svg class="a" style="left:575px;top:98px" width="24" height="24" viewBox="0 0 24 24"><path d="M21,9.5 L14,3 V7 C8,7 3,10 3,15 C3,19 6,21.5 10,21.5 C8,20 7,18 7,16 C7,13 10,12 14,12 V16 Z" fill="#c2c2c2" stroke="#b0b0b0" stroke-width="0.6"/></svg>
<svg class="a" style="left:611px;top:101px" width="6" height="20" viewBox="0 0 6 20"><circle cx="1.0" cy="1.5" r="0.65" fill="#bdb9b3"/><circle cx="4.2" cy="1.5" r="0.65" fill="#bdb9b3"/><circle cx="1.0" cy="4.6" r="0.65" fill="#bdb9b3"/><circle cx="4.2" cy="4.6" r="0.65" fill="#bdb9b3"/><circle cx="1.0" cy="7.7" r="0.65" fill="#bdb9b3"/><circle cx="4.2" cy="7.7" r="0.65" fill="#bdb9b3"/><circle cx="1.0" cy="10.8" r="0.65" fill="#bdb9b3"/><circle cx="4.2" cy="10.8" r="0.65" fill="#bdb9b3"/><circle cx="1.0" cy="13.9" r="0.65" fill="#bdb9b3"/><circle cx="4.2" cy="13.9" r="0.65" fill="#bdb9b3"/><circle cx="1.0" cy="17.0" r="0.65" fill="#bdb9b3"/><circle cx="4.2" cy="17.0" r="0.65" fill="#bdb9b3"/></svg>
<svg class="a" style="left:622px;top:98px" width="24" height="24" viewBox="0 0 24 24"><path d="M5.5,4 H22.5 V15 H5.5 L1.5,9.5 Z" fill="#f7e14a" stroke="#c9a21a" stroke-width="0.9"/><text x="6.5" y="12.6" font-family="Liberation Sans" font-weight="bold" font-size="7.6" fill="#333">abc</text></svg>
<svg class="a" style="left:657px;top:98px" width="24" height="24" viewBox="0 0 24 24"><circle cx="9" cy="9" r="7.5" fill="#d42020"/><path d="M9,9 L9,1.5 A7.5,7.5 0 0 1 16.1,6.7 Z" fill="#f7d21f"/><path d="M9,9 L1.7,7.3 A7.5,7.5 0 0 0 5,15.3 Z" fill="#3aa43a"/><rect x="9.5" y="15" width="3.5" height="7" fill="#f7d21f"/><rect x="13.5" y="10" width="3.5" height="12" fill="#2f9a2f"/><rect x="17.5" y="15.5" width="3.5" height="6.5" fill="#b01e1e"/></svg>
<div class="a" style="left:690px;top:100px;width:24px;height:21px;border:1.5px solid #3273d9;background:#dde6f0"></div>
<svg class="a" style="left:690px;top:98px" width="24" height="24" viewBox="0 0 24 24"><path d="M5,4 H20 V15 H5 L1,9.5 Z" fill="#f7e14a" stroke="#c9a21a" stroke-width="0.9"/><text x="6" y="12.6" font-family="Liberation Sans" font-weight="bold" font-size="7.6" fill="#333">ab</text><circle cx="17.5" cy="17.5" r="4.5" fill="#b51e24"/><path d="M16,7 V13" stroke="#fff" stroke-width="1.5"/></svg>
<svg class="a" style="left:723px;top:98px" width="24" height="24" viewBox="0 0 24 24"><path d="M5.5,4 H21.5 V15 H5.5 L1.5,9.5 Z" fill="#f1f1f1" stroke="#b5b5b5" stroke-width="0.9"/><text x="6.5" y="12.6" font-family="Liberation Sans" font-weight="bold" font-size="7.6" fill="#8f8f8f">ab</text><circle cx="16.5" cy="17.5" r="4.2" fill="#8e8e8e"/><path d="M16,8 V13" stroke="#999" stroke-width="1.3"/></svg>
<svg class="a" style="left:756px;top:98px" width="24" height="24" viewBox="0 0 24 24"><path d="M5.5,4 H21.5 V15 H5.5 L1.5,9.5 Z" fill="#f1f1f1" stroke="#b5b5b5" stroke-width="0.9"/><text x="6.5" y="12.6" font-family="Liberation Sans" font-weight="bold" font-size="7.6" fill="#8f8f8f">abc</text><path d="M7,18.5 C10,14 18,14 22,18.5 C18,23 10,23 7,18.5 Z" fill="#f5f5f5" stroke="#999" stroke-width="0.9"/><circle cx="14.5" cy="18.5" r="2.3" fill="#888"/></svg>
<svg class="a" style="left:789px;top:98px" width="24" height="24" viewBox="0 0 24 24"><path d="M5.5,4 H21.5 V15 H5.5 L1.5,9.5 Z" fill="#f1f1f1" stroke="#b5b5b5" stroke-width="0.9"/><text x="6.5" y="12.6" font-family="Liberation Sans" font-weight="bold" font-size="7.6" fill="#8f8f8f">abc</text><rect x="13" y="12" width="10.5" height="10.5" rx="1.5" fill="#b1b1b1"/><path d="M15,16 H18.5 V13.8 L22,17.3 L18.5,20.8 V18.6 H15 Z" fill="#fff"/></svg>
<svg class="a" style="left:822px;top:98px" width="24" height="24" viewBox="0 0 24 24"><path d="M5.5,4 H21.5 V15 H5.5 L1.5,9.5 Z" fill="#f1f1f1" stroke="#b5b5b5" stroke-width="0.9"/><text x="6.5" y="12.6" font-family="Liberation Sans" font-weight="bold" font-size="7.6" fill="#8f8f8f">abc</text><rect x="13" y="12" width="10.5" height="10.5" rx="1.5" fill="#b1b1b1"/><circle cx="18.25" cy="17.25" r="3" fill="none" stroke="#fff" stroke-width="1.3"/></svg>
<svg class="a" style="left:855px;top:98px" width="24" height="24" viewBox="0 0 24 24"><path d="M5.5,4 H21.5 V15 H5.5 L1.5,9.5 Z" fill="#f1f1f1" stroke="#b5b5b5" stroke-width="0.9"/><text x="6.5" y="12.6" font-family="Liberation Sans" font-weight="bold" font-size="7.6" fill="#8f8f8f">abc</text><rect x="13" y="12" width="10.5" height="10.5" rx="1.5" fill="#b1b1b1"/><path d="M15,21 L21.5,14.5" stroke="#fff" stroke-width="1.6"/></svg>
<svg class="a" style="left:891px;top:101px" width="6" height="20" viewBox="0 0 6 20"><circle cx="1.0" cy="1.5" r="0.65" fill="#bdb9b3"/><circle cx="4.2" cy="1.5" r="0.65" fill="#bdb9b3"/><circle cx="1.0" cy="4.6" r="0.65" fill="#bdb9b3"/><circle cx="4.2" cy="4.6" r="0.65" fill="#bdb9b3"/><circle cx="1.0" cy="7.7" r="0.65" fill="#bdb9b3"/><circle cx="4.2" cy="7.7" r="0.65" fill="#bdb9b3"/><circle cx="1.0" cy="10.8" r="0.65" fill="#bdb9b3"/><circle cx="4.2" cy="10.8" r="0.65" fill="#bdb9b3"/><circle cx="1.0" cy="13.9" r="0.65" fill="#bdb9b3"/><circle cx="4.2" cy="13.9" r="0.65" fill="#bdb9b3"/><circle cx="1.0" cy="17.0" r="0.65" fill="#bdb9b3"/><circle cx="4.2" cy="17.0" r="0.65" fill="#bdb9b3"/></svg>
<svg class="a" style="left:903px;top:98px" width="26" height="25" viewBox="0 0 26 25"><circle cx="13" cy="10.5" r="10" fill="#86acd9" stroke="#3d6498" stroke-width="0.9"/><path d="M4,8 C6,5 9,6 10,4 C12,2 15,4 14,6 C13,8 10,7 9,9 C8,11 5,11 4,8 Z M15,9 C17,7 20,8 21,10 C21,13 18,14 16,13 C14,12 14,10 15,9 Z" fill="#2e5a92"/><path d="M3.5,10.5 H22.5 M13,0.5 V20.5 M5,5 H21 M5,16 H21 M8,1.8 C6,7 6,14 8,19 M18,1.8 C20,7 20,14 18,19" stroke="#e8f0fa" stroke-width="0.7" fill="none"/><path d="M6.5,14.5 L9.5,12.5 H12 V17 H14 V12.5 H16.5 L19.5,14.5 V18 H6.5 Z" fill="#000"/><circle cx="7.5" cy="20" r="3.3" fill="#fff" stroke="#000" stroke-width="2.1"/><circle cx="18.5" cy="20" r="3.3" fill="#fff" stroke="#000" stroke-width="2.1"/></svg>
<svg class="a" style="left:940px;top:101px" width="6" height="20" viewBox="0 0 6 20"><circle cx="1.0" cy="1.5" r="0.65" fill="#bdb9b3"/><circle cx="4.2" cy="1.5" r="0.65" fill="#bdb9b3"/><circle cx="1.0" cy="4.6" r="0.65" fill="#bdb9b3"/><circle cx="4.2" cy="4.6" r="0.65" fill="#bdb9b3"/><circle cx="1.0" cy="7.7" r="0.65" fill="#bdb9b3"/><circle cx="4.2" cy="7.7" r="0.65" fill="#bdb9b3"/><circle cx="1.0" cy="10.8" r="0.65" fill="#bdb9b3"/><circle cx="4.2" cy="10.8" r="0.65" fill="#bdb9b3"/><circle cx="1.0" cy="13.9" r="0.65" fill="#bdb9b3"/><circle cx="4.2" cy="13.9" r="0.65" fill="#bdb9b3"/><circle cx="1.0" cy="17.0" r="0.65" fill="#bdb9b3"/><circle cx="4.2" cy="17.0" r="0.65" fill="#bdb9b3"/></svg>
<svg class="a" style="left:953px;top:98px" width="24" height="24" viewBox="0 0 24 24"><path d="M11.5,1.5 C7,1.5 7,3.5 7,5 V7.5 H12 V8.5 H4.5 C2,8.5 1.5,11 1.5,13 C1.5,15.5 2.5,17.5 5,17.5 H7 V14.5 C7,12.5 8.5,11 10.5,11 H15 C16.5,11 17.5,10 17.5,8.5 V4.5 C17.5,2.5 15.5,1.5 11.5,1.5 Z" fill="#3d77b0"/><path d="M12.5,22 C17,22 17,20 17,18.5 V16 H12 V15 H19.5 C22,15 22.5,12.5 22.5,10.5 C22.5,8 21.5,6 19,6 H17 V9 C17,11 15.5,12.5 13.5,12.5 H9 C7.5,12.5 6.5,13.5 6.5,15 V19 C6.5,21 8.5,22 12.5,22 Z" fill="#f7cd3b"/><circle cx="9.5" cy="4" r="0.9" fill="#fff"/><path d="M17,17.5 L22,19.5 L17,21.5" stroke="#444" stroke-width="1" fill="none"/></svg>
<svg class="a" style="left:989px;top:101px" width="6" height="20" viewBox="0 0 6 20"><circle cx="1.0" cy="1.5" r="0.65" fill="#bdb9b3"/><circle cx="4.2" cy="1.5" r="0.65" fill="#bdb9b3"/><circle cx="1.0" cy="4.6" r="0.65" fill="#bdb9b3"/><circle cx="4.2" cy="4.6" r="0.65" fill="#bdb9b3"/><circle cx="1.0" cy="7.7" r="0.65" fill="#bdb9b3"/><circle cx="4.2" cy="7.7" r="0.65" fill="#bdb9b3"/><circle cx="1.0" cy="10.8" r="0.65" fill="#bdb9b3"/><circle cx="4.2" cy="10.8" r="0.65" fill="#bdb9b3"/><circle cx="1.0" cy="13.9" r="0.65" fill="#bdb9b3"/><circle cx="4.2" cy="13.9" r="0.65" fill="#bdb9b3"/><circle cx="1.0" cy="17.0" r="0.65" fill="#bdb9b3"/><circle cx="4.2" cy="17.0" r="0.65" fill="#bdb9b3"/></svg>
<svg class="a" style="left:1003px;top:98px" width="22" height="24" viewBox="0 0 22 24"><rect x="1" y="1" width="20" height="21" fill="#6b9bd1" stroke="#263a4f" stroke-width="1"/><rect x="1" y="1" width="5" height="21" fill="#2c3e55"/><text x="9" y="16" font-family="Liberation Serif" font-size="14" fill="#fff">?</text></svg>
<svg class="a" style="left:1038px;top:101px" width="6" height="20" viewBox="0 0 6 20"><circle cx="1.0" cy="1.5" r="0.65" fill="#bdb9b3"/><circle cx="4.2" cy="1.5" r="0.65" fill="#bdb9b3"/><circle cx="1.0" cy="4.6" r="0.65" fill="#bdb9b3"/><circle cx="4.2" cy="4.6" r="0.65" fill="#bdb9b3"/><circle cx="1.0" cy="7.7" r="0.65" fill="#bdb9b3"/><circle cx="4.2" cy="7.7" r="0.65" fill="#bdb9b3"/><circle cx="1.0" cy="10.8" r="0.65" fill="#bdb9b3"/><circle cx="4.2" cy="10.8" r="0.65" fill="#bdb9b3"/><circle cx="1.0" cy="13.9" r="0.65" fill="#bdb9b3"/><circle cx="4.2" cy="13.9" r="0.65" fill="#bdb9b3"/><circle cx="1.0" cy="17.0" r="0.65" fill="#bdb9b3"/><circle cx="4.2" cy="17.0" r="0.65" fill="#bdb9b3"/></svg>
<svg class="a" style="left:8px;top:154px" width="22" height="22" viewBox="0 0 22 22"><path d="M5.5,5 L12.5,7.5 L11.5,10 L4.5,7.5 Z" fill="#f5e03a"/><path d="M4.5,7.5 L11.5,10 L10.7,12 L3.7,9.5 Z" fill="#7aa7dc"/><path d="M3.7,9.5 L10.7,12 L10,14.5 L3,12 Z" fill="#e8332c"/><path d="M8,11.5 L12,8 L16,12 L12,16 Z" fill="#ddb06a" stroke="#b98a3a" stroke-width="0.6"/><path d="M13.5,10 L18,4.5" stroke="#d39b3a" stroke-width="2" stroke-linecap="round"/></svg>
<svg class="a" style="left:35px;top:154px" width="20" height="20" viewBox="0 0 20 20"><path d="M2,10 V16.5 H8" fill="none" stroke="#777" stroke-width="0.9"/><rect x="4" y="7" width="9" height="8.5" fill="#f4f4f4" stroke="#777" stroke-width="0.9"/><rect x="6" y="4" width="9.5" height="9" fill="#fafafa" stroke="#777" stroke-width="0.9"/><path d="M9,12 V4 C9,2 12,2 12,4 V11" stroke="#3a5a88" stroke-width="1" fill="none"/><rect x="11.5" y="12" width="6.5" height="6" rx="1.5" fill="#4c8c4c"/><path d="M14.75,13.3 L16.5,15 L14.75,16.7 L13,15 Z" fill="#e8f2e8"/></svg>
<svg class="a" style="left:59px;top:155px" width="20" height="20" viewBox="0 0 20 20"><path d="M1,9.5 C4.5,3.5 13.5,3.5 17,9.5 C13.5,15.5 4.5,15.5 1,9.5 Z" fill="#e8e8e8" stroke="#888" stroke-width="0.9"/><circle cx="9" cy="9" r="3.8" fill="#6b9bd1"/><circle cx="9" cy="8.5" r="1.6" fill="#1b2b44"/><path d="M12,14.5 H18 L15,17.5 Z" fill="#333"/></svg>
<svg class="a" style="left:85px;top:155px" width="16" height="18" viewBox="0 0 16 18"><path d="M1,2 H14 V5 L9.5,10 V17 H5.5 V10 L1,5 Z" fill="#6b9bd1" stroke="#3d6aa6" stroke-width="0.7"/><rect x="1" y="1.5" width="13" height="2.5" fill="#f7d21f" stroke="#3d6aa6" stroke-width="0.6"/></svg>
<svg class="a" style="left:110px;top:155px" width="32" height="20" viewBox="0 0 32 20"><text x="1" y="11" font-family="Liberation Serif" font-size="13" fill="#a9a9a9">&#949;</text><path d="M8,17 V12.5 C8,10 13,10 13,12.5 V17" stroke="#b5b5b5" stroke-width="1.8" fill="none"/><path d="M21,6.5 H30 L25.5,11 Z" fill="#c8c5c1"/></svg>
<svg class="a" style="left:147px;top:156px" width="18" height="17" viewBox="0 0 18 17"><path d="M1.5,1.5 H8 M1.5,1.5 V15 M1.5,7.5 H4.5 M1.5,13 H4.5" stroke="#888" stroke-width="0.9" fill="none"/><rect x="4" y="5.5" width="3.5" height="3.5" fill="#f39c1f"/><rect x="4" y="11" width="3.5" height="3.5" fill="#f39c1f"/><path d="M10,1 H13.5 V9 H16.5 L11.75,14.5 L7,9 H10 Z" fill="#5b8fd0" stroke="#3d6aa6" stroke-width="0.6"/></svg>
<svg class="a" style="left:184px;top:161px" width="10" height="8" viewBox="0 0 10 8"><path d="M1,0.5 L4,3.5 L1,6.5 M5,0.5 L8,3.5 L5,6.5" stroke="#111" stroke-width="1.7" fill="none"/></svg>
<svg class="a" style="left:171px;top:134px" width="12" height="12" viewBox="0 0 12 12"><rect x="0.5" y="0.5" width="11" height="11" rx="2" fill="none" stroke="#7d7d7d" stroke-width="1"/><rect x="4.5" y="2.5" width="5" height="5" fill="none" stroke="#6d6d6d" stroke-width="1"/><rect x="2.5" y="4.5" width="5" height="5" fill="#efebe7" stroke="#6d6d6d" stroke-width="1"/></svg>
<svg class="a" style="left:185px;top:134px" width="12" height="12" viewBox="0 0 12 12"><rect x="0.5" y="0.5" width="11" height="11" rx="2" fill="none" stroke="#7d7d7d" stroke-width="1"/><path d="M3,3 L9,9 M9,3 L3,9" stroke="#5a5a5a" stroke-width="2"/></svg>
<svg class="a" style="left:1335px;top:134px" width="12" height="12" viewBox="0 0 12 12"><rect x="0.5" y="0.5" width="11" height="11" rx="2" fill="none" stroke="#7d7d7d" stroke-width="1"/><rect x="4.5" y="2.5" width="5" height="5" fill="none" stroke="#6d6d6d" stroke-width="1"/><rect x="2.5" y="4.5" width="5" height="5" fill="#efebe7" stroke="#6d6d6d" stroke-width="1"/></svg>
<svg class="a" style="left:1349px;top:134px" width="12" height="12" viewBox="0 0 12 12"><rect x="0.5" y="0.5" width="11" height="11" rx="2" fill="none" stroke="#7d7d7d" stroke-width="1"/><path d="M3,3 L9,9 M9,3 L3,9" stroke="#5a5a5a" stroke-width="2"/></svg>
<svg class="a" style="left:26px;top:259px" width="14" height="14" viewBox="0 0 14 14"><path d="M3,7.5 L5.8,11 L11,2.5" stroke="#111" stroke-width="1.8" fill="none"/></svg>
<svg class="a" style="left:26px;top:297px" width="14" height="14" viewBox="0 0 14 14"><path d="M3,7.5 L5.8,11 L11,2.5" stroke="#111" stroke-width="1.8" fill="none"/></svg>
<svg class="a" style="left:1168px;top:605px" width="14" height="14" viewBox="0 0 14 14"><path d="M3,7.5 L5.8,11 L11,2.5" stroke="#111" stroke-width="1.8" fill="none"/></svg>
<svg class="a" style="left:1165px;top:636px" width="14" height="14" viewBox="0 0 14 14"><path d="M3,7.5 L5.8,11 L11,2.5" stroke="#111" stroke-width="1.8" fill="none"/></svg>
<svg class="a" style="left:955px;top:188px" width="24" height="22" viewBox="0 0 24 22"><path d="M1,14 L5,5 L13,9 L9,18 Z" fill="#6fa0d8"/><path d="M1,14 L3,9.5 L11,13.5 L9,18 Z" fill="#d65b6e"/><path d="M5,5 L4,7.5 L12,11.5 L13,9 Z" fill="#c3d96a"/><path d="M8,12 L13,8 L18,14 L13,19 Z" fill="#b9ad82" stroke="#8a7d55" stroke-width="0.7"/><path d="M15,11 L22,4" stroke="#a8905a" stroke-width="2.4" stroke-linecap="round"/></svg>
<svg class="a" style="left:997px;top:187px" width="14" height="20" viewBox="0 0 14 20"><rect x="1" y="2" width="10" height="3.2" rx="1" fill="#1aa44a" stroke="#0d6b2c" stroke-width="0.6"/><rect x="3" y="8" width="10" height="3.2" rx="1" fill="#1aa44a" stroke="#0d6b2c" stroke-width="0.6"/><rect x="1" y="14" width="10" height="3.2" rx="1" fill="#1aa44a" stroke="#0d6b2c" stroke-width="0.6"/></svg>
<svg class="a" style="left:954px;top:157px" width="20" height="14" viewBox="0 0 20 14"><path d="M2,4 C2,1 5,1 8,2.5 C11,4 14,1 17,2 C19,3 19,8 17,9.5 C15,11 11,8 8,9.5 C5,11 2,9 2,4 Z" fill="#e8e8e8" stroke="#8a8a8a" stroke-width="0.9"/></svg>
<svg class="a" style="left:953px;top:225px" width="24" height="14" viewBox="0 0 24 14"><path d="M5,1 H22 V12 H5 L1,6.5 Z" fill="#f7e14a" stroke="#c9a21a" stroke-width="0.9"/><text x="6" y="9.6" font-family="Liberation Sans" font-weight="bold" font-size="7.6" fill="#333">abc</text></svg>
<svg class="a" style="left:954px;top:252px" width="22" height="24" viewBox="0 0 22 24"><path d="M10,1.5 L19,6 L10,10.5 L1,6 Z" fill="#f08a8a" stroke="#c22" stroke-width="0.8"/><path d="M1,6 L10,10.5 V21.5 L1,17 Z" fill="#8ad040" stroke="#5a9a20" stroke-width="0.6"/><path d="M19,6 L10,10.5 V21.5 L19,17 Z" fill="#f5d84a" stroke="#c9a21a" stroke-width="0.6"/></svg>
<svg class="a" style="left:953px;top:283px" width="24" height="24" viewBox="0 0 24 24"><rect x="8" y="1" width="8" height="6" fill="#e8707a" stroke="#c44" stroke-width="0.5"/><path d="M12,7 V11 M5,11 H19 M5,11 V16 M19,11 V16 M12,11 V16" stroke="#e0a020" stroke-width="1.3" fill="none"/><rect x="1" y="16" width="8" height="6" fill="#f5d84a" stroke="#c9a21a" stroke-width="0.5"/><rect x="15" y="16" width="8" height="6" fill="#8fbde8" stroke="#4a7ab0" stroke-width="0.5"/></svg>
<svg class="a" style="left:954px;top:318px" width="22" height="20" viewBox="0 0 22 20"><path d="M3,9 C3,4 7,2 11,4 L11,1.5 L15,6 L11,9.5 V7 C8,6 6,7 6,9 Z" fill="#5fae6a"/><path d="M19,11 C19,16 15,18 11,16 V18.5 L7,14 L11,10.5 V13 C14,14 16,13 16,11 Z" fill="#f08a3a"/></svg>
<svg class="a" style="left:996px;top:343px" width="16" height="16" viewBox="0 0 16 16"><path d="M6,2 H10 V6 H14 V10 H10 V14 H6 V10 H2 V6 H6 Z" fill="#eaf4ea" stroke="#3c8a3c" stroke-width="1.1"/></svg>
<svg class="a" style="left:1030px;top:343px" width="16" height="16" viewBox="0 0 16 16"><rect x="3" y="6" width="10" height="4" fill="#eee" stroke="#a5a5a5" stroke-width="1"/></svg>
<svg class="a" style="left:1064px;top:343px" width="16" height="16" viewBox="0 0 16 16"><rect x="3" y="8" width="10" height="7" rx="1" fill="#c5c5c5"/><path d="M5,8 V5 C5,2 10,2 10.5,4.5" stroke="#b5b5b5" stroke-width="1.6" fill="none"/></svg>
<svg class="a" style="left:1098px;top:343px" width="16" height="16" viewBox="0 0 16 16"><rect x="2" y="5" width="9" height="9" fill="#e6e6e6" stroke="#a5a5a5" stroke-width="1"/><rect x="5" y="2" width="9" height="9" fill="#f3f3f3" stroke="#a5a5a5" stroke-width="1"/><rect x="10" y="10" width="4" height="4" fill="#c0c0c0"/></svg>
<svg class="a" style="left:1132px;top:343px" width="16" height="16" viewBox="0 0 16 16"><path d="M2,13 L8,3 L14,13 Z" fill="#c5c5c5" stroke="#a5a5a5" stroke-width="0.8"/></svg>
<svg class="a" style="left:1166px;top:343px" width="16" height="16" viewBox="0 0 16 16"><path d="M2,3 L8,13 L14,3 Z" fill="#c5c5c5" stroke="#a5a5a5" stroke-width="0.8"/></svg>
<svg class="a" style="left:1347px;top:380px" width="10" height="8" viewBox="0 0 10 8"><path d="M1,6 L5,2 L9,6 Z" fill="#333"/></svg>
<svg class="a" style="left:1347px;top:553px" width="10" height="8" viewBox="0 0 10 8"><path d="M1,2 L5,6 L9,2 Z" fill="#333"/></svg>
<svg class="a" style="left:1324px;top:406px" width="12" height="20" viewBox="0 0 12 20"><path d="M1,0 V20" stroke="#c9c5bf"/><path d="M3,7 L6.5,3 L10,7 Z" fill="#aaa"/><path d="M3,13 L6.5,17 L10,13 Z" fill="#444"/></svg>
<svg class="a" style="left:1325px;top:437px" width="11" height="8" viewBox="0 0 11 8"><path d="M1,1 H10 L5.5,6 Z" fill="#333"/></svg>
<svg class="a" style="left:999px;top:535px" width="16" height="16" viewBox="0 0 16 16"><circle cx="6.5" cy="6.5" r="4.3" fill="none" stroke="#888" stroke-width="1.2"/><path d="M9.5,9.5 L13.5,13.5" stroke="#888" stroke-width="1.5"/></svg>
<svg class="a" style="left:1262px;top:536px" width="16" height="12" viewBox="0 0 16 12"><path d="M5,1 H15 V11 H5 L0.5,6 Z" fill="#b5b5b5"/><path d="M7.5,3.5 L12.5,8.5 M12.5,3.5 L7.5,8.5" stroke="#fff" stroke-width="1.4"/></svg>
<svg class="a" style="left:1314px;top:533px" width="20" height="20" viewBox="0 0 20 20"><circle cx="5.5" cy="5.5" r="3.2" fill="#d5622a"/><path d="M11,9 L16,3.5" stroke="#4a76b0" stroke-width="1.6"/><rect x="2.5" y="11" width="6.5" height="6.5" fill="#8cb38c"/><text x="11" y="17.5" font-family="Liberation Serif" font-size="9" fill="#333">a</text></svg>
<svg class="a" style="left:993px;top:605px" width="18" height="16" viewBox="0 0 18 16"><path d="M2,6 L7,1.5 V4 C12,4 15,6 15,10 C15,13 13,14.5 10.5,15 C12,13.5 12,12 12,11 C12,9 10,8 7,8 V10.5 Z" fill="#f08a3a"/></svg>
<svg class="a" style="left:1023px;top:605px" width="18" height="16" viewBox="0 0 18 16"><path d="M16,6 L11,1.5 V4 C6,4 3,6 3,10 C3,13 5,14.5 7.5,15 C6,13.5 6,12 6,11 C6,9 8,8 11,8 V10.5 Z" fill="#5fae6a"/></svg>
<svg class="a" style="left:1288px;top:603px" width="18" height="18" viewBox="0 0 18 18"><path d="M1.5,10 L4,8 L7,13 L15,1.5 L17,3 L7.5,17 Z" fill="#9acd32" stroke="#6a9a1a" stroke-width="0.7"/></svg>
<svg class="a" style="left:12px;top:635px" width="16" height="16" viewBox="0 0 16 16"><circle cx="7" cy="6.5" r="4.5" fill="none" stroke="#8a8a8a" stroke-width="1.1"/><path d="M10.3,9.8 L14,13.5" stroke="#8a8a8a" stroke-width="1.3"/></svg>
<svg class="a" style="left:653px;top:633px" width="18" height="20" viewBox="0 0 18 20"><ellipse cx="8" cy="10" rx="5.5" ry="7" fill="#ddd" stroke="#333" stroke-width="1.3"/><path d="M4,7 H12 M8,3 V10" stroke="#333" stroke-width="1"/><circle cx="11" cy="14" r="3" fill="#eee" stroke="#333" stroke-width="1"/><path d="M13,4 L16,2" stroke="#555" stroke-width="0.8"/></svg>
<svg class="a" style="left:822px;top:634px" width="16" height="18" viewBox="0 0 16 18"><rect x="2" y="8" width="12" height="9" rx="1" fill="#6a6a6a"/><path d="M4.5,8 V5.5 C4.5,1.5 11.5,1.5 11.5,5.5 V8" stroke="#6a6a6a" stroke-width="1.8" fill="none"/></svg>
<svg class="a" style="left:986px;top:633px" width="12" height="22" viewBox="0 0 12 22"><path d="M2,8 L6,3.5 L10,8 Z" fill="#666"/><path d="M2,14 L6,18.5 L10,14 Z" fill="#444"/></svg>
<svg class="a" style="left:1146px;top:633px" width="12" height="22" viewBox="0 0 12 22"><path d="M2,8 L6,3.5 L10,8 Z" fill="#666"/><path d="M2,14 L6,18.5 L10,14 Z" fill="#444"/></svg>
<svg class="a" style="left:1240px;top:635px" width="18" height="18" viewBox="0 0 18 18"><circle cx="8.5" cy="8.5" r="7" fill="none" stroke="#777" stroke-width="1"/><ellipse cx="8.5" cy="8.5" rx="3" ry="7" fill="none" stroke="#777" stroke-width="1"/><path d="M1.5,8.5 H15.5 M2.5,5 H14.5 M2.5,12 H14.5" stroke="#777" stroke-width="0.9"/></svg>
<svg class="a" style="left:1338px;top:635px" width="18" height="18" viewBox="0 0 18 18"><path d="M9,1.5 C13.5,1.5 16.5,4 16.5,7.5 C16.5,11 13.5,13.5 9,13.5 C8,13.5 7,13.3 6.5,13.1 L13,16.5 C10,16.5 5,15 3.5,12 C2,11 1.5,9.5 1.5,7.5 C1.5,4 4.5,1.5 9,1.5 Z" fill="#6a6a6a"/><circle cx="5.5" cy="7.5" r="1.2" fill="#fff"/><circle cx="9" cy="7.5" r="1.2" fill="#fff"/><circle cx="12.5" cy="7.5" r="1.2" fill="#fff"/></svg>
<svg class="a" style="left:200px;top:371px" width="3" height="18" viewBox="0 0 3 18"><circle cx="1.5" cy="1.5" r="0.7" fill="#999"/><circle cx="1.5" cy="4.5" r="0.7" fill="#999"/><circle cx="1.5" cy="7.5" r="0.7" fill="#999"/><circle cx="1.5" cy="10.5" r="0.7" fill="#999"/><circle cx="1.5" cy="13.5" r="0.7" fill="#999"/><circle cx="1.5" cy="16.5" r="0.7" fill="#999"/></svg>
<svg class="a" style="left:941px;top:371px" width="3" height="18" viewBox="0 0 3 18"><circle cx="1.5" cy="1.5" r="0.7" fill="#999"/><circle cx="1.5" cy="4.5" r="0.7" fill="#999"/><circle cx="1.5" cy="7.5" r="0.7" fill="#999"/><circle cx="1.5" cy="10.5" r="0.7" fill="#999"/><circle cx="1.5" cy="13.5" r="0.7" fill="#999"/><circle cx="1.5" cy="16.5" r="0.7" fill="#999"/></svg>
<!--/ICONS-->
<!-- black frame -->
<div class="a" style="left:0;top:0;width:1364px;height:2px;background:#000"></div>
<div class="a" style="left:0;top:659px;width:1364px;height:2px;background:#000"></div>
<div class="a" style="left:0;top:0;width:2px;height:661px;background:#000"></div>
<div class="a" style="left:1362px;top:0;width:2px;height:661px;background:#000"></div>
</body></html>
